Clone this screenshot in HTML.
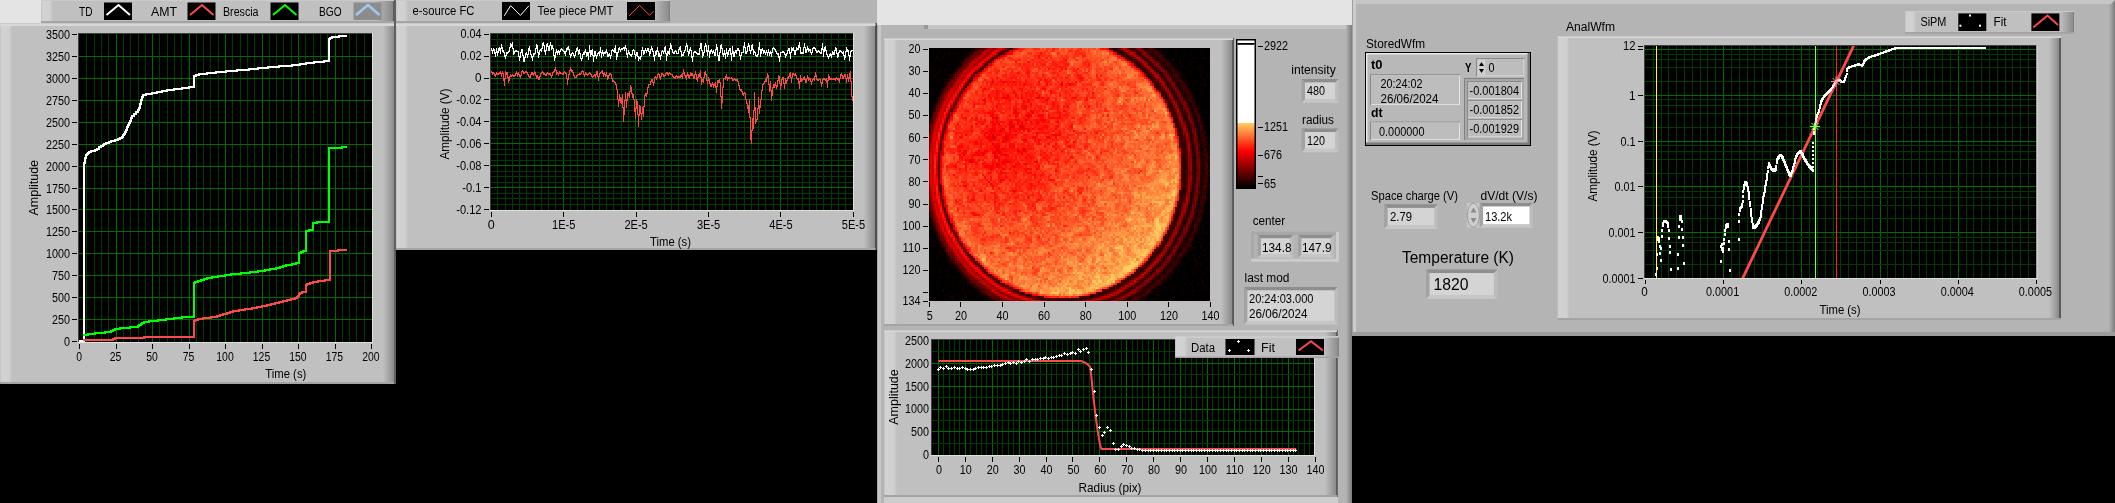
<!DOCTYPE html>
<html><head><meta charset="utf-8"><title>LabVIEW panel</title>
<style>html,body{margin:0;padding:0;background:#000;width:2115px;height:503px;overflow:hidden;position:relative}
text{font-family:"Liberation Sans",sans-serif}</style></head><body>
<svg width="2115" height="503" viewBox="0 0 2115 503" style="position:absolute;left:0;top:0;will-change:transform;font-family:'Liberation Sans',sans-serif">
<defs>
<linearGradient id="gL" x1="0" x2="1"><stop offset="0" stop-color="#bcbcbc"/><stop offset="0.1" stop-color="#d2d2d2"/><stop offset="0.75" stop-color="#d0d0d0"/><stop offset="1" stop-color="#c0c0c0"/></linearGradient>
<linearGradient id="gR" x1="0" x2="1"><stop offset="0" stop-color="#c0c0c0"/><stop offset="0.85" stop-color="#8a8a8a"/><stop offset="0.86" stop-color="#5a5a5a"/><stop offset="1" stop-color="#5a5a5a"/></linearGradient>
<clipPath id="c1"><rect x="79" y="34" width="293" height="308"/></clipPath>
<clipPath id="c2"><rect x="491" y="33" width="362" height="176"/></clipPath>
<clipPath id="c3"><rect x="929" y="48" width="281" height="253"/></clipPath>
<radialGradient id="disk" cx="0.6" cy="0.65" r="0.7"><stop offset="0" stop-color="#ff9a40"/><stop offset="0.6" stop-color="#ff6020"/><stop offset="0.95" stop-color="#ff5018"/><stop offset="1" stop-color="#a00000"/></radialGradient>
<clipPath id="c4"><rect x="932" y="341" width="382" height="114"/></clipPath>
<clipPath id="c5"><rect x="1645" y="46" width="391" height="232"/></clipPath>
<linearGradient id="gRL" x1="0" x2="1"><stop offset="0" stop-color="#c0c0c0"/><stop offset="0.9" stop-color="#8e8e8e"/><stop offset="1" stop-color="#7a7a7a"/></linearGradient>
<linearGradient id="gR2" x1="0" x2="1"><stop offset="0" stop-color="#b4b4b4"/><stop offset="1" stop-color="#7c7c7c"/></linearGradient>
<linearGradient id="ramp" x1="0" x2="0" y1="0" y2="1"><stop offset="0" stop-color="#fff"/><stop offset="0.56" stop-color="#fff"/><stop offset="0.561" stop-color="#ffd060"/><stop offset="0.75" stop-color="#ff0000"/><stop offset="0.92" stop-color="#500000"/><stop offset="1" stop-color="#000"/></linearGradient>
</defs>
<rect x="0.00" y="0.00" width="2115.00" height="503.00" fill="#000" />
<rect x="0.00" y="0.00" width="41.00" height="24.00" fill="#e4e4e4" />
<rect x="669.00" y="0.00" width="208.00" height="23.00" fill="#b4b4b4" />
<rect x="877.00" y="0.00" width="475.00" height="25.00" fill="#e4e4e4" />
<rect x="41.00" y="0.00" width="355.00" height="23.00" fill="#c0c0c0" />
<rect x="41" y="0" width="12" height="23" fill="url(#gL)"/>
<rect x="374" y="0" width="22" height="23" fill="url(#gR)"/>
<rect x="41.00" y="0.00" width="355.00" height="1.00" fill="#cacaca" />
<rect x="41.00" y="1.00" width="355.00" height="0.00" fill="#d8d8d8" />
<rect x="41.00" y="21.00" width="355.00" height="2.00" fill="#a4a4a4" />
<rect x="394.00" y="0.00" width="2.00" height="24.00" fill="#606060" />
<text x="79.0" y="15.5" font-size="12" textLength="13.5" lengthAdjust="spacingAndGlyphs" >TD</text>
<rect x="104.00" y="2.50" width="28.00" height="17.50" fill="#000" />
<polyline points="106.5,15.0 118.5,5.0 130.0,15.0" fill="none" stroke="#fff" stroke-width="2" stroke-linejoin="miter" />
<text x="151.0" y="15.5" font-size="12" textLength="26.0" lengthAdjust="spacingAndGlyphs" >AMT</text>
<rect x="187.50" y="2.50" width="28.00" height="17.50" fill="#000" />
<polyline points="190.0,15.0 202.0,5.0 213.5,15.0" fill="none" stroke="#ff4848" stroke-width="2" stroke-linejoin="miter" />
<text x="223.0" y="15.5" font-size="12" textLength="35.5" lengthAdjust="spacingAndGlyphs" >Brescia</text>
<rect x="270.50" y="2.50" width="28.00" height="17.50" fill="#000" />
<polyline points="273.0,15.0 285.0,5.0 296.5,15.0" fill="none" stroke="#00ff00" stroke-width="2" stroke-linejoin="miter" />
<text x="319.0" y="15.5" font-size="12" textLength="22.5" lengthAdjust="spacingAndGlyphs" >BGO</text>
<rect x="353.50" y="2.50" width="28.00" height="17.50" fill="#8c8c8c" />
<polyline points="356.0,15.0 368.0,5.0 379.5,15.0" fill="none" stroke="#a0c8f0" stroke-width="2.5" stroke-linejoin="miter" />
<rect x="0.00" y="23.00" width="396.00" height="361.00" fill="#c0c0c0" />
<rect x="0" y="23" width="12" height="361" fill="url(#gL)"/>
<rect x="383" y="23" width="13" height="361" fill="url(#gR)"/>
<rect x="0.00" y="23.00" width="396.00" height="1.00" fill="#cacaca" />
<rect x="0.00" y="24.00" width="396.00" height="2.00" fill="#d8d8d8" />
<rect x="0.00" y="382.00" width="396.00" height="2.00" fill="#a4a4a4" />
<rect x="394.00" y="23.00" width="2.00" height="361.00" fill="#606060" />
<rect x="78.00" y="33.00" width="294.00" height="309.00" fill="#000" />
<line x1="78.00" y1="33.50" x2="372.00" y2="33.50" stroke="#404040" stroke-width="1"/>
<line x1="78.50" y1="33.00" x2="78.50" y2="342.00" stroke="#404040" stroke-width="1"/>
<line x1="78.00" y1="342.50" x2="373.00" y2="342.50" stroke="#e0e0e0" stroke-width="1"/>
<line x1="372.50" y1="33.00" x2="372.50" y2="343.00" stroke="#e0e0e0" stroke-width="1"/>
<rect x="86" y="34" width="1" height="308" fill="#003c00"/>
<rect x="94" y="34" width="1" height="308" fill="#003c00"/>
<rect x="101" y="34" width="1" height="308" fill="#003c00"/>
<rect x="108" y="34" width="1" height="308" fill="#003c00"/>
<rect x="116" y="34" width="1" height="308" fill="#006c00"/>
<rect x="123" y="34" width="1" height="308" fill="#003c00"/>
<rect x="130" y="34" width="1" height="308" fill="#003c00"/>
<rect x="138" y="34" width="1" height="308" fill="#003c00"/>
<rect x="145" y="34" width="1" height="308" fill="#003c00"/>
<rect x="152" y="34" width="1" height="308" fill="#006c00"/>
<rect x="159" y="34" width="1" height="308" fill="#003c00"/>
<rect x="167" y="34" width="1" height="308" fill="#003c00"/>
<rect x="174" y="34" width="1" height="308" fill="#003c00"/>
<rect x="181" y="34" width="1" height="308" fill="#003c00"/>
<rect x="189" y="34" width="1" height="308" fill="#006c00"/>
<rect x="196" y="34" width="1" height="308" fill="#003c00"/>
<rect x="203" y="34" width="1" height="308" fill="#003c00"/>
<rect x="210" y="34" width="1" height="308" fill="#003c00"/>
<rect x="218" y="34" width="1" height="308" fill="#003c00"/>
<rect x="225" y="34" width="1" height="308" fill="#006c00"/>
<rect x="232" y="34" width="1" height="308" fill="#003c00"/>
<rect x="240" y="34" width="1" height="308" fill="#003c00"/>
<rect x="247" y="34" width="1" height="308" fill="#003c00"/>
<rect x="254" y="34" width="1" height="308" fill="#003c00"/>
<rect x="262" y="34" width="1" height="308" fill="#006c00"/>
<rect x="269" y="34" width="1" height="308" fill="#003c00"/>
<rect x="276" y="34" width="1" height="308" fill="#003c00"/>
<rect x="283" y="34" width="1" height="308" fill="#003c00"/>
<rect x="291" y="34" width="1" height="308" fill="#003c00"/>
<rect x="298" y="34" width="1" height="308" fill="#006c00"/>
<rect x="305" y="34" width="1" height="308" fill="#003c00"/>
<rect x="313" y="34" width="1" height="308" fill="#003c00"/>
<rect x="320" y="34" width="1" height="308" fill="#003c00"/>
<rect x="327" y="34" width="1" height="308" fill="#003c00"/>
<rect x="335" y="34" width="1" height="308" fill="#006c00"/>
<rect x="342" y="34" width="1" height="308" fill="#003c00"/>
<rect x="349" y="34" width="1" height="308" fill="#003c00"/>
<rect x="356" y="34" width="1" height="308" fill="#003c00"/>
<rect x="364" y="34" width="1" height="308" fill="#003c00"/>
<rect x="79" y="319" width="293" height="1" fill="#006c00"/>
<rect x="79" y="297" width="293" height="1" fill="#006c00"/>
<rect x="79" y="275" width="293" height="1" fill="#006c00"/>
<rect x="79" y="253" width="293" height="1" fill="#006c00"/>
<rect x="79" y="231" width="293" height="1" fill="#006c00"/>
<rect x="79" y="209" width="293" height="1" fill="#006c00"/>
<rect x="79" y="188" width="293" height="1" fill="#006c00"/>
<rect x="79" y="166" width="293" height="1" fill="#006c00"/>
<rect x="79" y="144" width="293" height="1" fill="#006c00"/>
<rect x="79" y="122" width="293" height="1" fill="#006c00"/>
<rect x="79" y="100" width="293" height="1" fill="#006c00"/>
<rect x="79" y="78" width="293" height="1" fill="#006c00"/>
<rect x="79" y="56" width="293" height="1" fill="#006c00"/>
<line x1="72.00" y1="341.50" x2="77.00" y2="341.50" stroke="#000" stroke-width="1"/>
<text x="70.0" y="346.0" font-size="12" text-anchor="end" textLength="6.0" lengthAdjust="spacingAndGlyphs" >0</text>
<line x1="72.00" y1="319.50" x2="77.00" y2="319.50" stroke="#000" stroke-width="1"/>
<text x="70.0" y="324.0" font-size="12" text-anchor="end" textLength="18.0" lengthAdjust="spacingAndGlyphs" >250</text>
<line x1="72.00" y1="297.50" x2="77.00" y2="297.50" stroke="#000" stroke-width="1"/>
<text x="70.0" y="302.0" font-size="12" text-anchor="end" textLength="18.0" lengthAdjust="spacingAndGlyphs" >500</text>
<line x1="72.00" y1="275.50" x2="77.00" y2="275.50" stroke="#000" stroke-width="1"/>
<text x="70.0" y="280.0" font-size="12" text-anchor="end" textLength="18.0" lengthAdjust="spacingAndGlyphs" >750</text>
<line x1="72.00" y1="253.50" x2="77.00" y2="253.50" stroke="#000" stroke-width="1"/>
<text x="70.0" y="258.0" font-size="12" text-anchor="end" textLength="24.0" lengthAdjust="spacingAndGlyphs" >1000</text>
<line x1="72.00" y1="231.50" x2="77.00" y2="231.50" stroke="#000" stroke-width="1"/>
<text x="70.0" y="236.0" font-size="12" text-anchor="end" textLength="24.0" lengthAdjust="spacingAndGlyphs" >1250</text>
<line x1="72.00" y1="209.50" x2="77.00" y2="209.50" stroke="#000" stroke-width="1"/>
<text x="70.0" y="214.0" font-size="12" text-anchor="end" textLength="24.0" lengthAdjust="spacingAndGlyphs" >1500</text>
<line x1="72.00" y1="188.50" x2="77.00" y2="188.50" stroke="#000" stroke-width="1"/>
<text x="70.0" y="193.0" font-size="12" text-anchor="end" textLength="24.0" lengthAdjust="spacingAndGlyphs" >1750</text>
<line x1="72.00" y1="166.50" x2="77.00" y2="166.50" stroke="#000" stroke-width="1"/>
<text x="70.0" y="171.0" font-size="12" text-anchor="end" textLength="24.0" lengthAdjust="spacingAndGlyphs" >2000</text>
<line x1="72.00" y1="144.50" x2="77.00" y2="144.50" stroke="#000" stroke-width="1"/>
<text x="70.0" y="149.0" font-size="12" text-anchor="end" textLength="24.0" lengthAdjust="spacingAndGlyphs" >2250</text>
<line x1="72.00" y1="122.50" x2="77.00" y2="122.50" stroke="#000" stroke-width="1"/>
<text x="70.0" y="127.0" font-size="12" text-anchor="end" textLength="24.0" lengthAdjust="spacingAndGlyphs" >2500</text>
<line x1="72.00" y1="100.50" x2="77.00" y2="100.50" stroke="#000" stroke-width="1"/>
<text x="70.0" y="105.0" font-size="12" text-anchor="end" textLength="24.0" lengthAdjust="spacingAndGlyphs" >2750</text>
<line x1="72.00" y1="78.50" x2="77.00" y2="78.50" stroke="#000" stroke-width="1"/>
<text x="70.0" y="83.0" font-size="12" text-anchor="end" textLength="24.0" lengthAdjust="spacingAndGlyphs" >3000</text>
<line x1="72.00" y1="56.50" x2="77.00" y2="56.50" stroke="#000" stroke-width="1"/>
<text x="70.0" y="61.0" font-size="12" text-anchor="end" textLength="24.0" lengthAdjust="spacingAndGlyphs" >3250</text>
<line x1="72.00" y1="34.50" x2="77.00" y2="34.50" stroke="#000" stroke-width="1"/>
<text x="70.0" y="39.0" font-size="12" text-anchor="end" textLength="24.0" lengthAdjust="spacingAndGlyphs" >3500</text>
<line x1="79.50" y1="344.00" x2="79.50" y2="349.00" stroke="#000" stroke-width="1"/>
<text x="79.1" y="360.8" font-size="12" text-anchor="middle" textLength="5.8" lengthAdjust="spacingAndGlyphs" >0</text>
<line x1="116.50" y1="344.00" x2="116.50" y2="349.00" stroke="#000" stroke-width="1"/>
<text x="115.5" y="360.8" font-size="12" text-anchor="middle" textLength="11.6" lengthAdjust="spacingAndGlyphs" >25</text>
<line x1="152.50" y1="344.00" x2="152.50" y2="349.00" stroke="#000" stroke-width="1"/>
<text x="152.0" y="360.8" font-size="12" text-anchor="middle" textLength="11.6" lengthAdjust="spacingAndGlyphs" >50</text>
<line x1="189.50" y1="344.00" x2="189.50" y2="349.00" stroke="#000" stroke-width="1"/>
<text x="188.5" y="360.8" font-size="12" text-anchor="middle" textLength="11.6" lengthAdjust="spacingAndGlyphs" >75</text>
<line x1="225.50" y1="344.00" x2="225.50" y2="349.00" stroke="#000" stroke-width="1"/>
<text x="225.0" y="360.8" font-size="12" text-anchor="middle" textLength="17.4" lengthAdjust="spacingAndGlyphs" >100</text>
<line x1="262.50" y1="344.00" x2="262.50" y2="349.00" stroke="#000" stroke-width="1"/>
<text x="261.5" y="360.8" font-size="12" text-anchor="middle" textLength="17.4" lengthAdjust="spacingAndGlyphs" >125</text>
<line x1="298.50" y1="344.00" x2="298.50" y2="349.00" stroke="#000" stroke-width="1"/>
<text x="297.9" y="360.8" font-size="12" text-anchor="middle" textLength="17.4" lengthAdjust="spacingAndGlyphs" >150</text>
<line x1="335.50" y1="344.00" x2="335.50" y2="349.00" stroke="#000" stroke-width="1"/>
<text x="334.4" y="360.8" font-size="12" text-anchor="middle" textLength="17.4" lengthAdjust="spacingAndGlyphs" >175</text>
<line x1="371.50" y1="344.00" x2="371.50" y2="349.00" stroke="#000" stroke-width="1"/>
<text x="370.9" y="360.8" font-size="12" text-anchor="middle" textLength="17.4" lengthAdjust="spacingAndGlyphs" >200</text>
<text x="285.8" y="377.6" font-size="12" text-anchor="middle" textLength="41.0" lengthAdjust="spacingAndGlyphs" >Time (s)</text>
<text x="38.0" y="187.7" font-size="12" text-anchor="middle" textLength="55.5" lengthAdjust="spacingAndGlyphs" transform="rotate(-90 38.0 187.7)" >Amplitude</text>
<g clip-path="url(#c1)">
<path d="M78 341L84 341L84 165V163H85V158H86L86 156V155H87V154H88V153H89L89 152H91V151H95V150L97 150H97V149H99V148H99V147L100 147H101V146H103V145H104V144H106V143L107 143H109V142H111V141H115V140L116 140H118V139H120V138L122 138V137H123V135H124V134H125V132H126L126 131V130H127V127H128V125H129V123H130V121H131V118H132L132 117H132V116H134V115H134V114H136V113H136V112H138V111H138V110L139 110V108H140V104H141L141 102V100H142V97H143L143 95H146V94L149 94H152V93H157V92H162V91H167V90L170 90H174V89H182V88H189V87L193 87L194 87L194 76H196V75H199V74L201 74H207V73L212 73H216V72H226V71L230 71H237V70L244 70H249V69H258V68H268V67L273 67H279V66H292V65L298 65H300V64H306V63L308 63H314V62L319 62H324V61L329 61L329 61L329 39H330V38H332V37L333 37H339V36L346 36" fill="none" stroke="#fff" stroke-width="2" shape-rendering="crispEdges" stroke-linecap="square"/>
<path d="M84 335H88V334H95V333L99 333H105V332L110 332H111V331H113V330H115V329L116 329H120V328L124 328H130V327L137 327H138V326H139V325L140 325H141V324H142V323H144V322L145 322H149V321L154 321H158V320H166V319L170 319H174V318H182V317L186 317L193 317L194 317L194 283H195V282H198V281L199 281H201V280H204V279H207V278L209 278H212V277H218V276L221 276H225V275H231V274L235 274H241V273L246 273H250V272H258V271L262 271H265V270H270V269H276V268L279 268H280V267H283V266L284 266H286V265H292V264L294 264H296V263L298 263L299 263L299 253H301V252H303V251L305 251L306 251L306 231H309V230L312 230L313 230L313 223H317V222L321 222L329 222L329 222L329 148L338 148H342V147L346 147" fill="none" stroke="#00ff00" stroke-width="2" shape-rendering="crispEdges" stroke-linecap="square"/>
<path d="M84 340L113 340H113V339H115V338L115 338L143 338H144V337L145 337L193 337L194 337L194 321H195V320H198V319L199 319H203V318H211V317L215 317H217V316H220V315H223V314H227V313H230V312H233V311L235 311H239V310H245V309L249 309H252V308H257V307H262V306L265 306H267V305H271V304H275V303H279V302L281 302H283V301H287V300H291V299H295V298L297 298V297H298V296H299V294H300L300 293H302V292L305 292L306 292L306 285H307V284H310V283H313V282L314 282H318V281H325V280L329 280L330 280L330 251H338V250L346 250" fill="none" stroke="#ff4848" stroke-width="2" shape-rendering="crispEdges" stroke-linecap="square"/>
</g>
<rect x="396.00" y="0.00" width="274.00" height="23.00" fill="#c0c0c0" />
<rect x="396" y="0" width="12" height="23" fill="url(#gL)"/>
<rect x="652" y="0" width="18" height="23" fill="url(#gRL)"/>
<rect x="396.00" y="0.00" width="274.00" height="1.00" fill="#cacaca" />
<rect x="396.00" y="1.00" width="274.00" height="0.00" fill="#d8d8d8" />
<rect x="396.00" y="21.00" width="274.00" height="2.00" fill="#a4a4a4" />
<text x="412.5" y="15.0" font-size="12" textLength="62.0" lengthAdjust="spacingAndGlyphs" >e-source FC</text>
<rect x="502.00" y="2.00" width="28.00" height="18.00" fill="#000" />
<polyline points="504.2,15.9 510.6,5.7 520.5,15.3 529.0,5.7" fill="none" stroke="#fff" stroke-width="1" stroke-linejoin="miter" />
<text x="537.5" y="15.0" font-size="12" textLength="76.0" lengthAdjust="spacingAndGlyphs" >Tee piece PMT</text>
<rect x="627.00" y="2.00" width="28.00" height="18.00" fill="#000" />
<polyline points="629.0,15.9 639.6,5.4 649.6,15.3 653.8,11.0" fill="none" stroke="#ff4848" stroke-width="1" stroke-linejoin="miter" />
<rect x="396.00" y="23.00" width="481.00" height="227.00" fill="#c0c0c0" />
<rect x="396" y="23" width="12" height="227" fill="url(#gL)"/>
<rect x="864" y="23" width="13" height="227" fill="url(#gR)"/>
<rect x="396.00" y="23.00" width="481.00" height="1.00" fill="#cacaca" />
<rect x="396.00" y="24.00" width="481.00" height="2.00" fill="#d8d8d8" />
<rect x="396.00" y="248.00" width="481.00" height="2.00" fill="#a4a4a4" />
<rect x="875.50" y="23.00" width="1.50" height="227.00" fill="#4a4a4a" />
<rect x="490.00" y="33.00" width="363.00" height="177.00" fill="#000" />
<line x1="490.00" y1="33.50" x2="853.00" y2="33.50" stroke="#404040" stroke-width="1"/>
<line x1="490.50" y1="33.00" x2="490.50" y2="210.00" stroke="#404040" stroke-width="1"/>
<line x1="490.00" y1="210.50" x2="854.00" y2="210.50" stroke="#e0e0e0" stroke-width="1"/>
<line x1="853.50" y1="33.00" x2="853.50" y2="211.00" stroke="#e0e0e0" stroke-width="1"/>
<rect x="497" y="34" width="1" height="176" fill="#003c00"/>
<rect x="505" y="34" width="1" height="176" fill="#003c00"/>
<rect x="512" y="34" width="1" height="176" fill="#003c00"/>
<rect x="519" y="34" width="1" height="176" fill="#003c00"/>
<rect x="526" y="34" width="1" height="176" fill="#003c00"/>
<rect x="534" y="34" width="1" height="176" fill="#003c00"/>
<rect x="541" y="34" width="1" height="176" fill="#003c00"/>
<rect x="548" y="34" width="1" height="176" fill="#003c00"/>
<rect x="555" y="34" width="1" height="176" fill="#003c00"/>
<rect x="563" y="34" width="1" height="176" fill="#006c00"/>
<rect x="570" y="34" width="1" height="176" fill="#003c00"/>
<rect x="577" y="34" width="1" height="176" fill="#003c00"/>
<rect x="584" y="34" width="1" height="176" fill="#003c00"/>
<rect x="592" y="34" width="1" height="176" fill="#003c00"/>
<rect x="599" y="34" width="1" height="176" fill="#003c00"/>
<rect x="606" y="34" width="1" height="176" fill="#003c00"/>
<rect x="613" y="34" width="1" height="176" fill="#003c00"/>
<rect x="621" y="34" width="1" height="176" fill="#003c00"/>
<rect x="628" y="34" width="1" height="176" fill="#003c00"/>
<rect x="635" y="34" width="1" height="176" fill="#006c00"/>
<rect x="642" y="34" width="1" height="176" fill="#003c00"/>
<rect x="649" y="34" width="1" height="176" fill="#003c00"/>
<rect x="657" y="34" width="1" height="176" fill="#003c00"/>
<rect x="664" y="34" width="1" height="176" fill="#003c00"/>
<rect x="671" y="34" width="1" height="176" fill="#003c00"/>
<rect x="678" y="34" width="1" height="176" fill="#003c00"/>
<rect x="686" y="34" width="1" height="176" fill="#003c00"/>
<rect x="693" y="34" width="1" height="176" fill="#003c00"/>
<rect x="700" y="34" width="1" height="176" fill="#003c00"/>
<rect x="707" y="34" width="1" height="176" fill="#006c00"/>
<rect x="715" y="34" width="1" height="176" fill="#003c00"/>
<rect x="722" y="34" width="1" height="176" fill="#003c00"/>
<rect x="729" y="34" width="1" height="176" fill="#003c00"/>
<rect x="736" y="34" width="1" height="176" fill="#003c00"/>
<rect x="744" y="34" width="1" height="176" fill="#003c00"/>
<rect x="751" y="34" width="1" height="176" fill="#003c00"/>
<rect x="758" y="34" width="1" height="176" fill="#003c00"/>
<rect x="765" y="34" width="1" height="176" fill="#003c00"/>
<rect x="773" y="34" width="1" height="176" fill="#003c00"/>
<rect x="780" y="34" width="1" height="176" fill="#006c00"/>
<rect x="787" y="34" width="1" height="176" fill="#003c00"/>
<rect x="794" y="34" width="1" height="176" fill="#003c00"/>
<rect x="802" y="34" width="1" height="176" fill="#003c00"/>
<rect x="809" y="34" width="1" height="176" fill="#003c00"/>
<rect x="816" y="34" width="1" height="176" fill="#003c00"/>
<rect x="823" y="34" width="1" height="176" fill="#003c00"/>
<rect x="831" y="34" width="1" height="176" fill="#003c00"/>
<rect x="838" y="34" width="1" height="176" fill="#003c00"/>
<rect x="845" y="34" width="1" height="176" fill="#003c00"/>
<rect x="491" y="39" width="362" height="1" fill="#003c00"/>
<rect x="491" y="45" width="362" height="1" fill="#003c00"/>
<rect x="491" y="50" width="362" height="1" fill="#003c00"/>
<rect x="491" y="56" width="362" height="1" fill="#006c00"/>
<rect x="491" y="61" width="362" height="1" fill="#003c00"/>
<rect x="491" y="67" width="362" height="1" fill="#003c00"/>
<rect x="491" y="72" width="362" height="1" fill="#003c00"/>
<rect x="491" y="78" width="362" height="1" fill="#006c00"/>
<rect x="491" y="83" width="362" height="1" fill="#003c00"/>
<rect x="491" y="89" width="362" height="1" fill="#003c00"/>
<rect x="491" y="94" width="362" height="1" fill="#003c00"/>
<rect x="491" y="99" width="362" height="1" fill="#006c00"/>
<rect x="491" y="105" width="362" height="1" fill="#003c00"/>
<rect x="491" y="110" width="362" height="1" fill="#003c00"/>
<rect x="491" y="116" width="362" height="1" fill="#003c00"/>
<rect x="491" y="121" width="362" height="1" fill="#006c00"/>
<rect x="491" y="127" width="362" height="1" fill="#003c00"/>
<rect x="491" y="132" width="362" height="1" fill="#003c00"/>
<rect x="491" y="138" width="362" height="1" fill="#003c00"/>
<rect x="491" y="143" width="362" height="1" fill="#006c00"/>
<rect x="491" y="149" width="362" height="1" fill="#003c00"/>
<rect x="491" y="154" width="362" height="1" fill="#003c00"/>
<rect x="491" y="160" width="362" height="1" fill="#003c00"/>
<rect x="491" y="165" width="362" height="1" fill="#006c00"/>
<rect x="491" y="171" width="362" height="1" fill="#003c00"/>
<rect x="491" y="176" width="362" height="1" fill="#003c00"/>
<rect x="491" y="182" width="362" height="1" fill="#003c00"/>
<rect x="491" y="187" width="362" height="1" fill="#006c00"/>
<rect x="491" y="193" width="362" height="1" fill="#003c00"/>
<rect x="491" y="198" width="362" height="1" fill="#003c00"/>
<rect x="491" y="204" width="362" height="1" fill="#003c00"/>
<line x1="484.00" y1="34.50" x2="489.00" y2="34.50" stroke="#000" stroke-width="1"/>
<text x="481.5" y="38.4" font-size="12" text-anchor="end" textLength="21.1" lengthAdjust="spacingAndGlyphs" >0.04</text>
<line x1="484.00" y1="56.50" x2="489.00" y2="56.50" stroke="#000" stroke-width="1"/>
<text x="481.5" y="60.3" font-size="12" text-anchor="end" textLength="21.1" lengthAdjust="spacingAndGlyphs" >0.02</text>
<line x1="484.00" y1="78.50" x2="489.00" y2="78.50" stroke="#000" stroke-width="1"/>
<text x="481.5" y="82.2" font-size="12" text-anchor="end" textLength="6.5" lengthAdjust="spacingAndGlyphs" >0</text>
<line x1="484.00" y1="99.50" x2="489.00" y2="99.50" stroke="#000" stroke-width="1"/>
<text x="481.5" y="104.1" font-size="12" text-anchor="end" textLength="25.2" lengthAdjust="spacingAndGlyphs" >-0.02</text>
<line x1="484.00" y1="121.50" x2="489.00" y2="121.50" stroke="#000" stroke-width="1"/>
<text x="481.5" y="126.0" font-size="12" text-anchor="end" textLength="25.2" lengthAdjust="spacingAndGlyphs" >-0.04</text>
<line x1="484.00" y1="143.50" x2="489.00" y2="143.50" stroke="#000" stroke-width="1"/>
<text x="481.5" y="147.9" font-size="12" text-anchor="end" textLength="25.2" lengthAdjust="spacingAndGlyphs" >-0.06</text>
<line x1="484.00" y1="165.50" x2="489.00" y2="165.50" stroke="#000" stroke-width="1"/>
<text x="481.5" y="169.8" font-size="12" text-anchor="end" textLength="25.2" lengthAdjust="spacingAndGlyphs" >-0.08</text>
<line x1="484.00" y1="187.50" x2="489.00" y2="187.50" stroke="#000" stroke-width="1"/>
<text x="481.5" y="191.7" font-size="12" text-anchor="end" textLength="19.2" lengthAdjust="spacingAndGlyphs" >-0.1</text>
<line x1="484.00" y1="209.50" x2="489.00" y2="209.50" stroke="#000" stroke-width="1"/>
<text x="481.5" y="213.6" font-size="12" text-anchor="end" textLength="25.2" lengthAdjust="spacingAndGlyphs" >-0.12</text>
<line x1="491.50" y1="212.00" x2="491.50" y2="217.00" stroke="#000" stroke-width="1"/>
<text x="491.2" y="228.8" font-size="12" text-anchor="middle" textLength="7.0" lengthAdjust="spacingAndGlyphs" >0</text>
<line x1="563.50" y1="212.00" x2="563.50" y2="217.00" stroke="#000" stroke-width="1"/>
<text x="563.7" y="228.8" font-size="12" text-anchor="middle" textLength="23.4" lengthAdjust="spacingAndGlyphs" >1E-5</text>
<line x1="636.50" y1="212.00" x2="636.50" y2="217.00" stroke="#000" stroke-width="1"/>
<text x="636.1" y="228.8" font-size="12" text-anchor="middle" textLength="23.4" lengthAdjust="spacingAndGlyphs" >2E-5</text>
<line x1="708.50" y1="212.00" x2="708.50" y2="217.00" stroke="#000" stroke-width="1"/>
<text x="708.6" y="228.8" font-size="12" text-anchor="middle" textLength="23.4" lengthAdjust="spacingAndGlyphs" >3E-5</text>
<line x1="780.50" y1="212.00" x2="780.50" y2="217.00" stroke="#000" stroke-width="1"/>
<text x="781.0" y="228.8" font-size="12" text-anchor="middle" textLength="23.4" lengthAdjust="spacingAndGlyphs" >4E-5</text>
<line x1="853.50" y1="212.00" x2="853.50" y2="217.00" stroke="#000" stroke-width="1"/>
<text x="853.5" y="228.8" font-size="12" text-anchor="middle" textLength="23.4" lengthAdjust="spacingAndGlyphs" >5E-5</text>
<text x="670.5" y="246.0" font-size="12" text-anchor="middle" textLength="41.0" lengthAdjust="spacingAndGlyphs" >Time (s)</text>
<text x="449.0" y="124.0" font-size="12" text-anchor="middle" textLength="71.0" lengthAdjust="spacingAndGlyphs" transform="rotate(-90 449.0 124.0)" >Amplitude (V)</text>
<g clip-path="url(#c2)">
<path fill="#fff" d="M491 48h1v1h-1zM491 48h1v3h-1zM492 50h1v4h-1zM492 50h1v4h-1zM493 48h1v3h-1zM493 48h1v2h-1zM494 49h1v3h-1zM494 51h1v3h-1zM495 53h1v4h-1zM495 52h1v5h-1zM496 48h1v5h-1zM496 48h1v4h-1zM497 51h1v5h-1zM497 52h1v4h-1zM498 49h1v4h-1zM498 48h1v2h-1zM499 47h1v2h-1zM499 47h1v4h-1zM500 50h1v4h-1zM500 48h1v6h-1zM501 44h1v5h-1zM501 44h1v4h-1zM502 47h1v5h-1zM503 50h1v2h-1zM503 50h1v3h-1zM504 52h1v4h-1zM504 55h1v2h-1zM505 56h1v3h-1zM505 55h1v4h-1zM506 52h1v4h-1zM507 52h1v2h-1zM507 52h1v2h-1zM508 51h1v2h-1zM509 51h1v1h-1zM509 47h1v5h-1zM510 43h1v5h-1zM510 43h1v2h-1zM511 44h1v3h-1zM511 44h1v3h-1zM512 42h1v3h-1zM512 42h1v7h-1zM513 48h1v7h-1zM513 53h1v2h-1zM514 52h1v2h-1zM514 51h1v2h-1zM515 50h1v2h-1zM516 50h1v2h-1zM517 51h1v1h-1zM518 51h1v2h-1zM518 52h1v5h-1zM519 56h1v5h-1zM519 57h1v4h-1zM520 55h1v3h-1zM520 52h1v4h-1zM521 49h1v4h-1zM522 49h1v2h-1zM522 50h1v6h-1zM523 55h1v7h-1zM524 61h1v1h-1zM524 57h1v5h-1zM525 53h1v5h-1zM526 52h1v2h-1zM526 52h1v3h-1zM527 54h1v4h-1zM527 54h1v4h-1zM528 51h1v4h-1zM528 48h1v4h-1zM529 46h1v3h-1zM529 46h1v5h-1zM530 50h1v5h-1zM531 54h1v1h-1zM531 54h1v4h-1zM532 57h1v4h-1zM532 56h1v5h-1zM533 53h1v4h-1zM534 53h1v2h-1zM534 53h1v2h-1zM535 52h1v2h-1zM535 48h1v5h-1zM536 44h1v5h-1zM536 44h1v2h-1zM537 45h1v3h-1zM537 47h1v6h-1zM538 52h1v6h-1zM538 54h1v4h-1zM539 51h1v4h-1zM539 50h1v2h-1zM540 49h1v2h-1zM540 49h1v2h-1zM541 50h1v2h-1zM541 48h1v4h-1zM542 45h1v4h-1zM542 43h1v3h-1zM543 42h1v2h-1zM543 42h1v4h-1zM544 45h1v4h-1zM544 48h1v4h-1zM545 51h1v4h-1zM545 50h1v5h-1zM546 46h1v5h-1zM546 44h1v3h-1zM547 43h1v2h-1zM547 43h1v4h-1zM548 46h1v5h-1zM549 49h1v2h-1zM549 45h1v5h-1zM550 42h1v4h-1zM550 42h1v4h-1zM551 45h1v5h-1zM551 47h1v3h-1zM552 45h1v3h-1zM552 45h1v4h-1zM553 48h1v4h-1zM553 51h1v5h-1zM554 55h1v6h-1zM554 57h1v4h-1zM555 55h1v3h-1zM555 52h1v4h-1zM556 49h1v4h-1zM556 49h1v3h-1zM557 51h1v4h-1zM557 52h1v3h-1zM558 50h1v3h-1zM558 50h1v3h-1zM559 52h1v3h-1zM559 51h1v4h-1zM560 49h1v3h-1zM561 48h1v2h-1zM561 48h1v2h-1zM562 49h1v2h-1zM563 50h1v2h-1zM564 51h1v1h-1zM564 51h1v3h-1zM565 53h1v3h-1zM565 51h1v5h-1zM566 48h1v4h-1zM567 48h1v2h-1zM567 47h1v3h-1zM568 46h1v2h-1zM568 46h1v4h-1zM569 49h1v4h-1zM569 52h1v3h-1zM570 54h1v4h-1zM570 55h1v3h-1zM571 54h1v2h-1zM571 53h1v2h-1zM572 52h1v2h-1zM572 52h1v2h-1zM573 53h1v2h-1zM573 54h1v2h-1zM574 55h1v3h-1zM574 55h1v3h-1zM575 53h1v3h-1zM575 51h1v3h-1zM576 50h1v2h-1zM576 48h1v3h-1zM577 47h1v2h-1zM577 47h1v4h-1zM578 50h1v5h-1zM578 51h1v4h-1zM579 49h1v3h-1zM579 49h1v5h-1zM580 53h1v5h-1zM580 57h1v2h-1zM581 58h1v3h-1zM581 58h1v3h-1zM582 57h1v2h-1zM582 54h1v4h-1zM583 52h1v3h-1zM583 52h1v2h-1zM584 53h1v2h-1zM584 51h1v4h-1zM585 49h1v3h-1zM585 49h1v4h-1zM586 52h1v5h-1zM586 54h1v3h-1zM587 52h1v3h-1zM587 52h1v4h-1zM588 55h1v5h-1zM588 52h1v8h-1zM589 45h1v8h-1zM589 45h1v6h-1zM590 50h1v7h-1zM590 54h1v3h-1zM591 52h1v3h-1zM591 50h1v3h-1zM592 49h1v2h-1zM592 49h1v7h-1zM593 55h1v7h-1zM593 56h1v6h-1zM594 51h1v6h-1zM595 51h1v2h-1zM595 52h1v4h-1zM596 55h1v4h-1zM596 55h1v4h-1zM597 53h1v3h-1zM598 52h1v2h-1zM598 52h1v2h-1zM599 53h1v3h-1zM599 51h1v5h-1zM600 47h1v5h-1zM600 47h1v6h-1zM601 52h1v6h-1zM601 53h1v5h-1zM602 50h1v4h-1zM602 50h1v3h-1zM603 52h1v4h-1zM603 53h1v3h-1zM604 52h1v2h-1zM605 52h1v2h-1zM605 51h1v3h-1zM606 49h1v3h-1zM606 49h1v4h-1zM607 52h1v5h-1zM608 55h1v2h-1zM608 54h1v2h-1zM609 53h1v2h-1zM609 53h1v3h-1zM610 55h1v4h-1zM610 55h1v4h-1zM611 52h1v4h-1zM611 50h1v3h-1zM612 49h1v2h-1zM612 49h1v2h-1zM613 50h1v2h-1zM614 51h1v2h-1zM614 48h1v5h-1zM615 45h1v4h-1zM615 45h1v8h-1zM616 52h1v8h-1zM616 56h1v4h-1zM617 54h1v3h-1zM617 52h1v3h-1zM618 50h1v3h-1zM618 48h1v3h-1zM619 47h1v2h-1zM619 47h1v3h-1zM620 49h1v3h-1zM620 49h1v3h-1zM621 48h1v2h-1zM622 48h1v2h-1zM622 48h1v2h-1zM623 47h1v2h-1zM623 47h1v2h-1zM624 48h1v3h-1zM624 47h1v4h-1zM625 45h1v3h-1zM625 45h1v4h-1zM626 48h1v4h-1zM626 51h1v4h-1zM627 54h1v4h-1zM627 53h1v5h-1zM628 50h1v4h-1zM628 50h1v3h-1zM629 52h1v3h-1zM630 54h1v1h-1zM630 54h1v2h-1zM631 55h1v2h-1zM631 54h1v3h-1zM632 52h1v3h-1zM632 50h1v3h-1zM633 49h1v2h-1zM633 49h1v2h-1zM634 50h1v2h-1zM634 51h1v4h-1zM635 54h1v5h-1zM635 55h1v4h-1zM636 52h1v4h-1zM637 52h1v2h-1zM637 53h1v4h-1zM638 56h1v5h-1zM638 58h1v3h-1zM639 57h1v2h-1zM639 57h1v2h-1zM640 58h1v2h-1zM640 56h1v4h-1zM641 53h1v4h-1zM641 50h1v4h-1zM642 47h1v4h-1zM642 47h1v4h-1zM643 50h1v5h-1zM643 53h1v2h-1zM644 52h1v2h-1zM644 50h1v3h-1zM645 48h1v3h-1zM645 48h1v3h-1zM646 50h1v3h-1zM646 50h1v3h-1zM647 48h1v3h-1zM648 48h1v1h-1zM648 48h1v4h-1zM649 51h1v5h-1zM649 53h1v3h-1zM650 52h1v2h-1zM650 49h1v4h-1zM651 46h1v4h-1zM651 46h1v3h-1zM652 48h1v3h-1zM652 50h1v2h-1zM653 51h1v2h-1zM653 52h1v5h-1zM654 56h1v5h-1zM654 55h1v6h-1zM655 51h1v5h-1zM655 51h1v2h-1zM656 52h1v3h-1zM656 50h1v5h-1zM657 47h1v4h-1zM657 47h1v5h-1zM658 51h1v6h-1zM658 54h1v3h-1zM659 53h1v2h-1zM659 53h1v4h-1zM660 56h1v4h-1zM660 55h1v5h-1zM661 52h1v4h-1zM661 51h1v2h-1zM662 50h1v2h-1zM662 50h1v2h-1zM663 51h1v3h-1zM663 51h1v3h-1zM664 49h1v3h-1zM664 47h1v3h-1zM665 46h1v2h-1zM665 46h1v8h-1zM666 53h1v8h-1zM666 55h1v6h-1zM667 51h1v5h-1zM668 51h1v2h-1zM668 52h1v2h-1zM669 53h1v2h-1zM669 48h1v7h-1zM670 43h1v6h-1zM670 43h1v3h-1zM671 45h1v3h-1zM671 47h1v3h-1zM672 49h1v3h-1zM672 51h1v2h-1zM673 52h1v2h-1zM674 52h1v2h-1zM674 51h1v2h-1zM675 50h1v2h-1zM675 50h1v2h-1zM676 51h1v3h-1zM677 53h1v1h-1zM678 52h1v2h-1zM678 49h1v4h-1zM679 47h1v3h-1zM680 46h1v2h-1zM680 46h1v6h-1zM681 51h1v6h-1zM681 55h1v2h-1zM682 54h1v2h-1zM683 54h1v2h-1zM683 52h1v4h-1zM684 50h1v3h-1zM685 49h1v2h-1zM685 46h1v4h-1zM686 43h1v4h-1zM686 43h1v3h-1zM687 45h1v3h-1zM687 47h1v5h-1zM688 51h1v5h-1zM688 53h1v3h-1zM689 52h1v2h-1zM689 49h1v4h-1zM690 47h1v3h-1zM690 47h1v4h-1zM691 50h1v5h-1zM691 54h1v4h-1zM692 57h1v5h-1zM692 56h1v6h-1zM693 52h1v5h-1zM694 51h1v2h-1zM695 51h1v1h-1zM695 51h1v2h-1zM696 52h1v2h-1zM697 53h1v2h-1zM698 53h1v2h-1zM699 53h1v2h-1zM699 48h1v7h-1zM700 43h1v6h-1zM701 43h1v2h-1zM701 44h1v7h-1zM702 50h1v8h-1zM702 55h1v3h-1zM703 54h1v2h-1zM703 52h1v3h-1zM704 50h1v3h-1zM704 46h1v5h-1zM705 43h1v4h-1zM705 43h1v3h-1zM706 45h1v4h-1zM706 48h1v4h-1zM707 51h1v5h-1zM707 50h1v6h-1zM708 45h1v6h-1zM708 45h1v7h-1zM709 51h1v7h-1zM709 53h1v5h-1zM710 50h1v4h-1zM711 49h1v2h-1zM711 49h1v3h-1zM712 51h1v3h-1zM712 51h1v3h-1zM713 50h1v2h-1zM713 50h1v3h-1zM714 52h1v4h-1zM715 55h1v1h-1zM715 49h1v7h-1zM716 44h1v6h-1zM716 44h1v4h-1zM717 47h1v4h-1zM717 50h1v6h-1zM718 55h1v6h-1zM719 59h1v2h-1zM719 52h1v8h-1zM720 45h1v8h-1zM721 44h1v2h-1zM721 44h1v5h-1zM722 48h1v6h-1zM722 53h1v2h-1zM723 54h1v3h-1zM723 53h1v4h-1zM724 50h1v4h-1zM724 50h1v5h-1zM725 54h1v5h-1zM725 53h1v6h-1zM726 48h1v6h-1zM726 48h1v5h-1zM727 52h1v5h-1zM727 54h1v3h-1zM728 53h1v2h-1zM728 50h1v4h-1zM729 48h1v3h-1zM730 48h1v2h-1zM730 49h1v6h-1zM731 54h1v7h-1zM731 53h1v8h-1zM732 46h1v8h-1zM732 46h1v6h-1zM733 51h1v6h-1zM734 55h1v2h-1zM734 52h1v4h-1zM735 50h1v3h-1zM735 50h1v2h-1zM736 51h1v3h-1zM736 50h1v4h-1zM737 48h1v3h-1zM738 48h1v2h-1zM738 49h1v2h-1zM739 50h1v3h-1zM739 52h1v4h-1zM740 55h1v5h-1zM740 55h1v5h-1zM741 52h1v4h-1zM742 52h1v1h-1zM743 51h1v2h-1zM743 46h1v6h-1zM744 42h1v5h-1zM744 42h1v6h-1zM745 47h1v7h-1zM746 53h1v1h-1zM746 51h1v3h-1zM747 50h1v2h-1zM747 46h1v5h-1zM748 43h1v4h-1zM748 43h1v3h-1zM749 45h1v3h-1zM749 47h1v4h-1zM750 50h1v4h-1zM750 50h1v4h-1zM751 47h1v4h-1zM751 45h1v3h-1zM752 44h1v2h-1zM752 44h1v6h-1zM753 49h1v6h-1zM753 52h1v3h-1zM754 51h1v2h-1zM754 51h1v2h-1zM755 52h1v3h-1zM755 54h1v2h-1zM756 55h1v2h-1zM757 55h1v2h-1zM757 54h1v2h-1zM758 53h1v2h-1zM758 47h1v7h-1zM759 42h1v6h-1zM759 42h1v8h-1zM760 49h1v8h-1zM760 53h1v4h-1zM761 50h1v4h-1zM761 49h1v2h-1zM762 48h1v2h-1zM762 48h1v3h-1zM763 50h1v4h-1zM763 51h1v3h-1zM764 50h1v2h-1zM764 50h1v3h-1zM765 52h1v3h-1zM765 52h1v3h-1zM766 50h1v3h-1zM766 50h1v3h-1zM767 52h1v4h-1zM767 52h1v4h-1zM768 49h1v4h-1zM768 49h1v4h-1zM769 52h1v4h-1zM769 53h1v3h-1zM770 51h1v3h-1zM770 51h1v3h-1zM771 53h1v4h-1zM771 52h1v5h-1zM772 48h1v5h-1zM773 47h1v2h-1zM773 47h1v2h-1zM774 48h1v2h-1zM775 49h1v2h-1zM775 50h1v2h-1zM776 51h1v3h-1zM777 53h1v2h-1zM778 53h1v2h-1zM778 53h1v5h-1zM779 57h1v5h-1zM779 56h1v6h-1zM780 52h1v5h-1zM781 52h1v1h-1zM782 51h1v2h-1zM783 51h1v2h-1zM784 52h1v1h-1zM784 52h1v3h-1zM785 54h1v4h-1zM785 55h1v3h-1zM786 54h1v2h-1zM786 53h1v2h-1zM787 52h1v2h-1zM787 50h1v3h-1zM788 48h1v3h-1zM789 48h1v1h-1zM789 48h1v6h-1zM790 53h1v6h-1zM790 52h1v7h-1zM791 47h1v6h-1zM791 47h1v2h-1zM792 48h1v3h-1zM792 48h1v3h-1zM793 47h1v2h-1zM793 47h1v4h-1zM794 50h1v5h-1zM795 53h1v2h-1zM795 50h1v4h-1zM796 47h1v4h-1zM796 47h1v2h-1zM797 48h1v2h-1zM798 49h1v1h-1zM798 45h1v5h-1zM799 42h1v4h-1zM799 42h1v6h-1zM800 47h1v7h-1zM801 52h1v2h-1zM802 52h1v2h-1zM803 52h1v2h-1zM803 47h1v6h-1zM804 43h1v5h-1zM804 43h1v5h-1zM805 47h1v6h-1zM806 52h1v1h-1zM806 49h1v4h-1zM807 46h1v4h-1zM807 46h1v3h-1zM808 48h1v4h-1zM808 50h1v2h-1zM809 49h1v2h-1zM810 49h1v2h-1zM810 50h1v3h-1zM811 52h1v3h-1zM811 52h1v3h-1zM812 50h1v3h-1zM812 48h1v3h-1zM813 47h1v2h-1zM814 47h1v1h-1zM814 47h1v2h-1zM815 48h1v2h-1zM815 49h1v2h-1zM816 50h1v3h-1zM817 52h1v1h-1zM817 51h1v2h-1zM818 50h1v2h-1zM818 50h1v2h-1zM819 51h1v2h-1zM820 52h1v2h-1zM821 53h1v1h-1zM821 48h1v6h-1zM822 43h1v6h-1zM822 43h1v7h-1zM823 49h1v8h-1zM823 51h1v6h-1zM824 47h1v5h-1zM825 46h1v2h-1zM825 46h1v5h-1zM826 50h1v5h-1zM827 54h1v2h-1zM827 55h1v2h-1zM828 56h1v3h-1zM828 56h1v3h-1zM829 55h1v2h-1zM829 54h1v2h-1zM830 53h1v2h-1zM830 53h1v3h-1zM831 55h1v3h-1zM831 54h1v4h-1zM832 51h1v4h-1zM832 51h1v2h-1zM833 52h1v3h-1zM834 53h1v2h-1zM834 50h1v4h-1zM835 47h1v4h-1zM835 47h1v2h-1zM836 48h1v2h-1zM836 49h1v5h-1zM837 53h1v5h-1zM837 56h1v2h-1zM838 55h1v2h-1zM838 52h1v4h-1zM839 50h1v3h-1zM840 50h1v2h-1zM841 51h1v1h-1zM841 51h1v2h-1zM842 52h1v2h-1zM842 52h1v2h-1zM843 51h1v2h-1zM843 51h1v5h-1zM844 55h1v5h-1zM844 57h1v3h-1zM845 56h1v2h-1zM845 51h1v6h-1zM846 47h1v5h-1zM846 47h1v3h-1zM847 49h1v3h-1zM848 50h1v2h-1zM848 50h1v6h-1zM849 55h1v6h-1zM849 56h1v5h-1zM850 52h1v5h-1zM850 51h1v2h-1zM851 50h1v2h-1zM852 50h1v1h-1z"/>
<path fill="#ff4848" d="M491 71h1v1h-1zM491 71h1v2h-1zM492 72h1v3h-1zM492 73h1v2h-1zM493 72h1v2h-1zM493 72h1v2h-1zM494 73h1v2h-1zM494 74h1v2h-1zM495 75h1v2h-1zM495 74h1v3h-1zM496 72h1v3h-1zM496 72h1v2h-1zM497 73h1v2h-1zM498 73h1v2h-1zM499 72h1v2h-1zM500 71h1v2h-1zM500 71h1v3h-1zM501 73h1v4h-1zM501 73h1v4h-1zM502 71h1v3h-1zM502 71h1v3h-1zM503 73h1v3h-1zM503 75h1v6h-1zM504 80h1v6h-1zM504 78h1v8h-1zM505 71h1v8h-1zM505 71h1v2h-1zM506 72h1v3h-1zM506 73h1v2h-1zM507 72h1v2h-1zM507 72h1v6h-1zM508 77h1v6h-1zM508 80h1v3h-1zM509 78h1v3h-1zM509 76h1v3h-1zM510 74h1v3h-1zM510 74h1v2h-1zM511 75h1v2h-1zM511 75h1v2h-1zM512 74h1v2h-1zM512 74h1v2h-1zM513 75h1v2h-1zM514 75h1v2h-1zM515 75h1v1h-1zM515 73h1v3h-1zM516 71h1v3h-1zM516 71h1v3h-1zM517 73h1v4h-1zM517 74h1v3h-1zM518 72h1v3h-1zM518 72h1v3h-1zM519 74h1v3h-1zM520 76h1v2h-1zM520 75h1v3h-1zM521 73h1v3h-1zM521 71h1v3h-1zM522 70h1v2h-1zM522 70h1v2h-1zM523 71h1v3h-1zM524 73h1v1h-1zM524 72h1v2h-1zM525 71h1v2h-1zM526 71h1v2h-1zM527 72h1v1h-1zM527 72h1v3h-1zM528 74h1v3h-1zM529 76h1v2h-1zM530 77h1v1h-1zM530 74h1v4h-1zM531 72h1v3h-1zM532 72h1v2h-1zM532 73h1v2h-1zM533 74h1v2h-1zM533 73h1v3h-1zM534 71h1v3h-1zM534 71h1v2h-1zM535 72h1v2h-1zM535 73h1v3h-1zM536 75h1v4h-1zM536 76h1v3h-1zM537 75h1v2h-1zM537 75h1v3h-1zM538 77h1v3h-1zM539 79h1v1h-1zM539 76h1v4h-1zM540 73h1v4h-1zM541 72h1v2h-1zM542 71h1v2h-1zM542 71h1v2h-1zM543 72h1v3h-1zM544 73h1v2h-1zM544 73h1v2h-1zM545 74h1v2h-1zM546 75h1v1h-1zM546 73h1v3h-1zM547 72h1v2h-1zM547 72h1v2h-1zM548 73h1v2h-1zM549 73h1v2h-1zM550 73h1v1h-1zM550 73h1v3h-1zM551 75h1v3h-1zM551 75h1v3h-1zM552 73h1v3h-1zM552 72h1v2h-1zM553 71h1v2h-1zM554 71h1v1h-1zM554 69h1v3h-1zM555 67h1v3h-1zM555 67h1v4h-1zM556 70h1v5h-1zM556 73h1v2h-1zM557 72h1v2h-1zM557 72h1v2h-1zM558 73h1v3h-1zM558 73h1v3h-1zM559 71h1v3h-1zM559 71h1v2h-1zM560 72h1v2h-1zM561 73h1v1h-1zM562 73h1v2h-1zM563 73h1v2h-1zM563 72h1v2h-1zM564 71h1v2h-1zM564 71h1v2h-1zM565 72h1v2h-1zM566 73h1v1h-1zM566 73h1v6h-1zM567 78h1v7h-1zM567 79h1v6h-1zM568 74h1v6h-1zM569 73h1v2h-1zM569 70h1v4h-1zM570 67h1v4h-1zM570 67h1v3h-1zM571 69h1v3h-1zM572 70h1v2h-1zM572 70h1v3h-1zM573 72h1v3h-1zM573 74h1v2h-1zM574 75h1v3h-1zM575 77h1v1h-1zM576 76h1v2h-1zM576 75h1v2h-1zM577 74h1v2h-1zM578 74h1v1h-1zM579 73h1v2h-1zM580 73h1v2h-1zM580 73h1v2h-1zM581 72h1v2h-1zM581 71h1v2h-1zM582 70h1v2h-1zM582 70h1v2h-1zM583 71h1v3h-1zM583 73h1v2h-1zM584 74h1v3h-1zM584 74h1v3h-1zM585 72h1v3h-1zM585 72h1v2h-1zM586 73h1v2h-1zM587 74h1v2h-1zM587 74h1v2h-1zM588 73h1v2h-1zM589 72h1v2h-1zM589 72h1v2h-1zM590 73h1v2h-1zM591 74h1v2h-1zM591 75h1v2h-1zM592 76h1v2h-1zM592 76h1v2h-1zM593 75h1v2h-1zM594 74h1v2h-1zM594 74h1v2h-1zM595 75h1v3h-1zM595 74h1v4h-1zM596 71h1v4h-1zM597 71h1v2h-1zM597 72h1v5h-1zM598 76h1v5h-1zM598 76h1v5h-1zM599 73h1v4h-1zM600 72h1v2h-1zM601 72h1v1h-1zM601 71h1v2h-1zM602 70h1v2h-1zM602 70h1v4h-1zM603 73h1v4h-1zM603 74h1v3h-1zM604 72h1v3h-1zM604 72h1v3h-1zM605 74h1v3h-1zM605 74h1v3h-1zM606 72h1v3h-1zM606 72h1v4h-1zM607 75h1v5h-1zM607 78h1v2h-1zM608 77h1v2h-1zM608 75h1v3h-1zM609 73h1v3h-1zM610 73h1v2h-1zM611 74h1v2h-1zM611 75h1v4h-1zM612 78h1v4h-1zM613 80h1v2h-1zM613 80h1v2h-1zM614 81h1v2h-1zM615 82h1v2h-1zM615 83h1v2h-1zM616 84h1v3h-1zM616 86h1v4h-1zM617 89h1v5h-1zM617 93h1v7h-1zM618 99h1v8h-1zM618 100h1v7h-1zM619 94h1v7h-1zM619 94h1v4h-1zM620 97h1v5h-1zM620 101h1v2h-1zM621 102h1v2h-1zM621 98h1v6h-1zM622 94h1v5h-1zM622 94h1v14h-1zM623 107h1v15h-1zM623 114h1v8h-1zM624 108h1v7h-1zM624 100h1v9h-1zM625 92h1v9h-1zM625 92h1v8h-1zM626 99h1v9h-1zM626 100h1v8h-1zM627 93h1v8h-1zM628 93h1v1h-1zM628 93h1v3h-1zM629 95h1v3h-1zM629 91h1v7h-1zM630 85h1v7h-1zM630 85h1v3h-1zM631 87h1v3h-1zM631 89h1v5h-1zM632 93h1v5h-1zM632 95h1v3h-1zM633 94h1v2h-1zM633 94h1v6h-1zM634 99h1v6h-1zM634 104h1v8h-1zM635 111h1v8h-1zM635 108h1v11h-1zM636 99h1v10h-1zM636 99h1v3h-1zM637 101h1v3h-1zM637 103h1v12h-1zM638 114h1v13h-1zM638 115h1v12h-1zM639 105h1v11h-1zM639 105h1v2h-1zM640 106h1v3h-1zM640 108h1v6h-1zM641 113h1v7h-1zM641 113h1v7h-1zM642 107h1v7h-1zM642 107h1v5h-1zM643 111h1v6h-1zM643 106h1v11h-1zM644 97h1v10h-1zM644 95h1v3h-1zM645 93h1v3h-1zM645 93h1v2h-1zM646 94h1v3h-1zM646 93h1v4h-1zM647 90h1v4h-1zM647 87h1v4h-1zM648 84h1v4h-1zM649 84h1v1h-1zM650 83h1v2h-1zM650 81h1v3h-1zM651 79h1v3h-1zM652 79h1v2h-1zM652 80h1v3h-1zM653 82h1v4h-1zM653 82h1v4h-1zM654 79h1v4h-1zM654 77h1v3h-1zM655 76h1v2h-1zM655 76h1v2h-1zM656 77h1v3h-1zM656 77h1v3h-1zM657 76h1v2h-1zM657 74h1v3h-1zM658 73h1v2h-1zM658 73h1v2h-1zM659 74h1v2h-1zM659 75h1v3h-1zM660 77h1v3h-1zM660 76h1v4h-1zM661 73h1v4h-1zM662 73h1v1h-1zM662 73h1v2h-1zM663 74h1v3h-1zM664 76h1v1h-1zM664 75h1v2h-1zM665 74h1v2h-1zM665 73h1v2h-1zM666 72h1v2h-1zM667 72h1v2h-1zM667 73h1v2h-1zM668 74h1v2h-1zM668 73h1v3h-1zM669 72h1v2h-1zM669 72h1v2h-1zM670 73h1v2h-1zM671 74h1v1h-1zM672 74h1v2h-1zM672 75h1v2h-1zM673 76h1v2h-1zM674 77h1v2h-1zM675 78h1v1h-1zM675 76h1v3h-1zM676 75h1v2h-1zM676 75h1v2h-1zM677 76h1v3h-1zM677 77h1v2h-1zM678 76h1v2h-1zM679 76h1v2h-1zM680 77h1v1h-1zM680 75h1v3h-1zM681 74h1v2h-1zM681 74h1v3h-1zM682 76h1v3h-1zM682 73h1v6h-1zM683 69h1v5h-1zM683 69h1v4h-1zM684 72h1v4h-1zM685 75h1v1h-1zM685 75h1v3h-1zM686 77h1v3h-1zM686 75h1v5h-1zM687 72h1v4h-1zM687 72h1v3h-1zM688 74h1v4h-1zM689 77h1v2h-1zM689 75h1v4h-1zM690 72h1v4h-1zM690 72h1v2h-1zM691 73h1v3h-1zM691 74h1v2h-1zM692 73h1v2h-1zM692 73h1v3h-1zM693 75h1v4h-1zM694 77h1v2h-1zM694 74h1v4h-1zM695 71h1v4h-1zM695 71h1v4h-1zM696 74h1v4h-1zM696 77h1v3h-1zM697 79h1v3h-1zM697 77h1v5h-1zM698 74h1v4h-1zM698 74h1v2h-1zM699 75h1v2h-1zM699 73h1v4h-1zM700 70h1v4h-1zM700 70h1v8h-1zM701 77h1v8h-1zM701 81h1v4h-1zM702 79h1v3h-1zM702 79h1v2h-1zM703 80h1v3h-1zM703 77h1v6h-1zM704 73h1v5h-1zM704 72h1v2h-1zM705 71h1v2h-1zM705 71h1v4h-1zM706 74h1v4h-1zM706 77h1v4h-1zM707 80h1v4h-1zM707 80h1v4h-1zM708 77h1v4h-1zM708 77h1v3h-1zM709 79h1v3h-1zM709 81h1v3h-1zM710 83h1v4h-1zM711 86h1v1h-1zM711 84h1v3h-1zM712 82h1v3h-1zM712 82h1v3h-1zM713 84h1v4h-1zM713 85h1v3h-1zM714 84h1v2h-1zM714 83h1v2h-1zM715 82h1v2h-1zM715 82h1v6h-1zM716 87h1v6h-1zM716 86h1v7h-1zM717 80h1v7h-1zM717 80h1v2h-1zM718 81h1v2h-1zM718 80h1v3h-1zM719 79h1v2h-1zM719 79h1v4h-1zM720 82h1v4h-1zM720 85h1v12h-1zM721 96h1v13h-1zM721 102h1v7h-1zM722 96h1v7h-1zM722 87h1v10h-1zM723 78h1v10h-1zM724 78h1v1h-1zM725 78h1v2h-1zM725 76h1v4h-1zM726 74h1v3h-1zM726 74h1v4h-1zM727 77h1v4h-1zM727 78h1v3h-1zM728 77h1v2h-1zM729 77h1v2h-1zM730 78h1v1h-1zM731 77h1v2h-1zM731 77h1v2h-1zM732 78h1v3h-1zM733 79h1v2h-1zM734 78h1v2h-1zM734 78h1v2h-1zM735 79h1v2h-1zM736 79h1v2h-1zM737 79h1v2h-1zM737 80h1v2h-1zM738 81h1v2h-1zM738 82h1v4h-1zM739 85h1v5h-1zM740 89h1v2h-1zM741 89h1v2h-1zM741 89h1v3h-1zM742 91h1v4h-1zM743 94h1v2h-1zM743 93h1v3h-1zM744 92h1v2h-1zM744 92h1v2h-1zM745 93h1v3h-1zM745 95h1v5h-1zM746 99h1v5h-1zM747 103h1v2h-1zM747 104h1v5h-1zM748 108h1v5h-1zM748 105h1v8h-1zM749 99h1v7h-1zM749 99h1v19h-1zM750 117h1v19h-1zM750 135h1v5h-1zM751 139h1v5h-1zM751 130h1v14h-1zM752 118h1v13h-1zM752 118h1v6h-1zM753 123h1v6h-1zM753 110h1v19h-1zM754 92h1v19h-1zM754 92h1v16h-1zM755 107h1v17h-1zM755 121h1v3h-1zM756 119h1v3h-1zM757 119h1v1h-1zM757 108h1v12h-1zM758 97h1v12h-1zM758 97h1v9h-1zM759 105h1v9h-1zM759 107h1v7h-1zM760 102h1v6h-1zM760 99h1v4h-1zM761 97h1v3h-1zM761 90h1v8h-1zM762 84h1v7h-1zM763 83h1v2h-1zM764 83h1v1h-1zM764 81h1v3h-1zM765 79h1v3h-1zM765 79h1v2h-1zM766 80h1v2h-1zM766 77h1v5h-1zM767 73h1v5h-1zM767 73h1v3h-1zM768 75h1v4h-1zM768 78h1v7h-1zM769 84h1v8h-1zM769 86h1v6h-1zM770 81h1v6h-1zM770 81h1v10h-1zM771 90h1v11h-1zM771 95h1v6h-1zM772 90h1v6h-1zM772 87h1v4h-1zM773 84h1v4h-1zM773 84h1v2h-1zM774 85h1v3h-1zM774 84h1v4h-1zM775 82h1v3h-1zM775 82h1v4h-1zM776 85h1v4h-1zM776 86h1v3h-1zM777 85h1v2h-1zM777 80h1v6h-1zM778 75h1v6h-1zM778 75h1v2h-1zM779 76h1v2h-1zM779 77h1v7h-1zM780 83h1v7h-1zM780 85h1v5h-1zM781 81h1v5h-1zM781 79h1v3h-1zM782 77h1v3h-1zM783 77h1v2h-1zM783 78h1v6h-1zM784 83h1v6h-1zM784 83h1v6h-1zM785 78h1v6h-1zM785 78h1v3h-1zM786 80h1v4h-1zM786 80h1v4h-1zM787 77h1v4h-1zM788 77h1v2h-1zM788 76h1v3h-1zM789 75h1v2h-1zM789 73h1v3h-1zM790 72h1v2h-1zM790 72h1v6h-1zM791 77h1v6h-1zM791 77h1v6h-1zM792 73h1v5h-1zM793 73h1v2h-1zM794 74h1v2h-1zM794 74h1v2h-1zM795 73h1v2h-1zM795 73h1v3h-1zM796 75h1v3h-1zM796 77h1v2h-1zM797 78h1v2h-1zM798 78h1v2h-1zM798 78h1v6h-1zM799 83h1v6h-1zM799 81h1v8h-1zM800 75h1v7h-1zM800 75h1v4h-1zM801 78h1v4h-1zM801 80h1v2h-1zM802 79h1v2h-1zM803 78h1v2h-1zM803 77h1v2h-1zM804 76h1v2h-1zM804 76h1v4h-1zM805 79h1v4h-1zM806 81h1v2h-1zM806 78h1v4h-1zM807 75h1v4h-1zM807 75h1v3h-1zM808 77h1v4h-1zM808 79h1v2h-1zM809 78h1v2h-1zM810 78h1v2h-1zM810 79h1v3h-1zM811 81h1v4h-1zM811 81h1v4h-1zM812 79h1v3h-1zM813 78h1v2h-1zM813 78h1v2h-1zM814 79h1v2h-1zM814 76h1v5h-1zM815 72h1v5h-1zM815 72h1v4h-1zM816 75h1v5h-1zM817 79h1v2h-1zM818 79h1v2h-1zM819 79h1v1h-1zM820 79h1v1h-1zM820 79h1v4h-1zM821 82h1v5h-1zM821 83h1v4h-1zM822 80h1v4h-1zM822 79h1v2h-1zM823 78h1v2h-1zM824 78h1v2h-1zM825 79h1v2h-1zM825 79h1v2h-1zM826 78h1v2h-1zM826 78h1v5h-1zM827 82h1v6h-1zM827 80h1v8h-1zM828 74h1v7h-1zM828 74h1v3h-1zM829 76h1v4h-1zM830 78h1v2h-1zM831 78h1v2h-1zM832 79h1v1h-1zM833 78h1v2h-1zM834 78h1v2h-1zM835 79h1v2h-1zM835 78h1v3h-1zM836 77h1v2h-1zM836 77h1v2h-1zM837 78h1v2h-1zM838 78h1v2h-1zM838 78h1v3h-1zM839 80h1v3h-1zM839 78h1v5h-1zM840 74h1v5h-1zM841 73h1v2h-1zM841 73h1v3h-1zM842 75h1v4h-1zM843 78h1v1h-1zM843 76h1v3h-1zM844 74h1v3h-1zM845 74h1v2h-1zM845 75h1v4h-1zM846 78h1v5h-1zM846 78h1v5h-1zM847 74h1v5h-1zM847 74h1v4h-1zM848 77h1v5h-1zM848 78h1v4h-1zM849 75h1v4h-1zM849 73h1v3h-1zM850 71h1v3h-1zM850 71h1v11h-1zM851 81h1v12h-1zM851 92h1v5h-1zM852 96h1v5h-1z"/>
</g>
<rect x="877.00" y="25.00" width="475.00" height="478.00" fill="#b4b4b4" />
<rect x="928.00" y="25.00" width="424.00" height="4.00" fill="#c6c6c6" />
<rect x="924.00" y="25.00" width="4.00" height="4.00" fill="#989898" />
<rect x="877.00" y="25.00" width="1.00" height="478.00" fill="#a8a8a8" />
<rect x="878.00" y="25.00" width="3.00" height="478.00" fill="#c8c8c8" />
<rect x="1346" y="25" width="6" height="478" fill="url(#gR2)"/>
<rect x="884.00" y="38.00" width="350.00" height="288.00" fill="#c0c0c0" />
<rect x="884" y="38" width="13" height="288" fill="url(#gL)"/>
<rect x="1221" y="38" width="13" height="288" fill="url(#gR)"/>
<rect x="884.00" y="38.00" width="350.00" height="1.00" fill="#cacaca" />
<rect x="884.00" y="39.00" width="350.00" height="1.00" fill="#d8d8d8" />
<rect x="884.00" y="324.00" width="350.00" height="2.00" fill="#a4a4a4" />
<rect x="1233.00" y="38.00" width="1.00" height="288.00" fill="#5a5a5a" />
<rect x="929.00" y="48.00" width="281.00" height="253.00" fill="#000" />
<g clip-path="url(#c3)"><ellipse cx="1061" cy="168" rx="130" ry="139" fill="none" stroke="#900000" stroke-width="3"/><ellipse cx="1061" cy="168" rx="125" ry="134" fill="none" stroke="#c00000" stroke-width="3"/><ellipse cx="1060.5" cy="168" rx="121" ry="130" fill="url(#disk)"/></g>
<line x1="923.00" y1="49.50" x2="928.00" y2="49.50" stroke="#000" stroke-width="1"/>
<text x="920.5" y="52.9" font-size="12" text-anchor="end" textLength="12.0" lengthAdjust="spacingAndGlyphs" >20</text>
<line x1="923.00" y1="71.50" x2="928.00" y2="71.50" stroke="#000" stroke-width="1"/>
<text x="920.5" y="75.0" font-size="12" text-anchor="end" textLength="12.0" lengthAdjust="spacingAndGlyphs" >30</text>
<line x1="923.00" y1="93.50" x2="928.00" y2="93.50" stroke="#000" stroke-width="1"/>
<text x="920.5" y="97.2" font-size="12" text-anchor="end" textLength="12.0" lengthAdjust="spacingAndGlyphs" >40</text>
<line x1="923.00" y1="115.50" x2="928.00" y2="115.50" stroke="#000" stroke-width="1"/>
<text x="920.5" y="119.3" font-size="12" text-anchor="end" textLength="12.0" lengthAdjust="spacingAndGlyphs" >50</text>
<line x1="923.00" y1="137.50" x2="928.00" y2="137.50" stroke="#000" stroke-width="1"/>
<text x="920.5" y="141.5" font-size="12" text-anchor="end" textLength="12.0" lengthAdjust="spacingAndGlyphs" >60</text>
<line x1="923.00" y1="159.50" x2="928.00" y2="159.50" stroke="#000" stroke-width="1"/>
<text x="920.5" y="163.7" font-size="12" text-anchor="end" textLength="12.0" lengthAdjust="spacingAndGlyphs" >70</text>
<line x1="923.00" y1="181.50" x2="928.00" y2="181.50" stroke="#000" stroke-width="1"/>
<text x="920.5" y="185.8" font-size="12" text-anchor="end" textLength="12.0" lengthAdjust="spacingAndGlyphs" >80</text>
<line x1="923.00" y1="204.50" x2="928.00" y2="204.50" stroke="#000" stroke-width="1"/>
<text x="920.5" y="207.9" font-size="12" text-anchor="end" textLength="12.0" lengthAdjust="spacingAndGlyphs" >90</text>
<line x1="923.00" y1="226.50" x2="928.00" y2="226.50" stroke="#000" stroke-width="1"/>
<text x="920.5" y="230.1" font-size="12" text-anchor="end" textLength="18.0" lengthAdjust="spacingAndGlyphs" >100</text>
<line x1="923.00" y1="248.50" x2="928.00" y2="248.50" stroke="#000" stroke-width="1"/>
<text x="920.5" y="252.2" font-size="12" text-anchor="end" textLength="18.0" lengthAdjust="spacingAndGlyphs" >110</text>
<line x1="923.00" y1="270.50" x2="928.00" y2="270.50" stroke="#000" stroke-width="1"/>
<text x="920.5" y="274.4" font-size="12" text-anchor="end" textLength="18.0" lengthAdjust="spacingAndGlyphs" >120</text>
<line x1="923.00" y1="301.50" x2="928.00" y2="301.50" stroke="#000" stroke-width="1"/>
<text x="920.5" y="305.4" font-size="12" text-anchor="end" textLength="18.0" lengthAdjust="spacingAndGlyphs" >134</text>
<line x1="923.00" y1="292.50" x2="928.00" y2="292.50" stroke="#000" stroke-width="1"/>
<line x1="929.50" y1="302.00" x2="929.50" y2="307.00" stroke="#000" stroke-width="1"/>
<text x="929.7" y="320.0" font-size="12" text-anchor="middle" textLength="6.0" lengthAdjust="spacingAndGlyphs" >5</text>
<line x1="960.50" y1="302.00" x2="960.50" y2="307.00" stroke="#000" stroke-width="1"/>
<text x="960.9" y="320.0" font-size="12" text-anchor="middle" textLength="12.0" lengthAdjust="spacingAndGlyphs" >20</text>
<line x1="1002.50" y1="302.00" x2="1002.50" y2="307.00" stroke="#000" stroke-width="1"/>
<text x="1002.5" y="320.0" font-size="12" text-anchor="middle" textLength="12.0" lengthAdjust="spacingAndGlyphs" >40</text>
<line x1="1044.50" y1="302.00" x2="1044.50" y2="307.00" stroke="#000" stroke-width="1"/>
<text x="1044.1" y="320.0" font-size="12" text-anchor="middle" textLength="12.0" lengthAdjust="spacingAndGlyphs" >60</text>
<line x1="1085.50" y1="302.00" x2="1085.50" y2="307.00" stroke="#000" stroke-width="1"/>
<text x="1085.7" y="320.0" font-size="12" text-anchor="middle" textLength="12.0" lengthAdjust="spacingAndGlyphs" >80</text>
<line x1="1127.50" y1="302.00" x2="1127.50" y2="307.00" stroke="#000" stroke-width="1"/>
<text x="1127.3" y="320.0" font-size="12" text-anchor="middle" textLength="18.0" lengthAdjust="spacingAndGlyphs" >100</text>
<line x1="1168.50" y1="302.00" x2="1168.50" y2="307.00" stroke="#000" stroke-width="1"/>
<text x="1168.9" y="320.0" font-size="12" text-anchor="middle" textLength="18.0" lengthAdjust="spacingAndGlyphs" >120</text>
<line x1="1210.50" y1="302.00" x2="1210.50" y2="307.00" stroke="#000" stroke-width="1"/>
<text x="1210.5" y="320.0" font-size="12" text-anchor="middle" textLength="18.0" lengthAdjust="spacingAndGlyphs" >140</text>
<rect x="1236.00" y="39.00" width="20.00" height="150.00" fill="#000" />
<rect x="1237.5" y="40.5" width="17" height="147" fill="url(#ramp)"/>
<rect x="1237.50" y="43.00" width="17.00" height="1.80" fill="#000" />
<line x1="1258.00" y1="46.50" x2="1263.00" y2="46.50" stroke="#000" stroke-width="1"/>
<text x="1264.0" y="50.2" font-size="12" textLength="24.0" lengthAdjust="spacingAndGlyphs" >2922</text>
<line x1="1258.00" y1="127.50" x2="1263.00" y2="127.50" stroke="#000" stroke-width="1"/>
<text x="1264.0" y="131.3" font-size="12" textLength="24.0" lengthAdjust="spacingAndGlyphs" >1251</text>
<line x1="1258.00" y1="155.50" x2="1263.00" y2="155.50" stroke="#000" stroke-width="1"/>
<text x="1264.0" y="159.0" font-size="12" textLength="18.0" lengthAdjust="spacingAndGlyphs" >676</text>
<line x1="1258.00" y1="183.50" x2="1263.00" y2="183.50" stroke="#000" stroke-width="1"/>
<text x="1264.0" y="187.6" font-size="12" textLength="12.0" lengthAdjust="spacingAndGlyphs" >65</text>
<line x1="1258.00" y1="176.50" x2="1263.00" y2="176.50" stroke="#000" stroke-width="1"/>
<text x="1313.5" y="73.5" font-size="12" text-anchor="middle" textLength="44.5" lengthAdjust="spacingAndGlyphs" >intensity</text>
<path d="M1301.5 79H1338.7L1335.2 82.5H1305.0Z" fill="#8e8e8e"/>
<path d="M1301.5 79L1305.0 82.5V99.3L1301.5 102.8Z" fill="#a2a2a2"/>
<path d="M1301.5 102.8L1305.0 99.3H1335.2L1338.7 102.8Z" fill="#c6c6c6"/>
<path d="M1338.7 79V102.8L1335.2 99.3V82.5Z" fill="#bcbcbc"/>
<rect x="1305.00" y="82.50" width="30.20" height="16.80" fill="#d4d4d4" />
<text x="1307.0" y="95.0" font-size="12" textLength="18.0" lengthAdjust="spacingAndGlyphs" >480</text>
<text x="1318.0" y="124.0" font-size="12" text-anchor="middle" textLength="32.0" lengthAdjust="spacingAndGlyphs" >radius</text>
<path d="M1301.5 128.5H1338.7L1335.2 132.0H1305.0Z" fill="#8e8e8e"/>
<path d="M1301.5 128.5L1305.0 132.0V148.8L1301.5 152.3Z" fill="#a2a2a2"/>
<path d="M1301.5 152.3L1305.0 148.8H1335.2L1338.7 152.3Z" fill="#c6c6c6"/>
<path d="M1338.7 128.5V152.3L1335.2 148.8V132.0Z" fill="#bcbcbc"/>
<rect x="1305.00" y="132.00" width="30.20" height="16.80" fill="#d4d4d4" />
<text x="1307.0" y="145.0" font-size="12" textLength="18.0" lengthAdjust="spacingAndGlyphs" >120</text>
<text x="1269.0" y="225.2" font-size="12" text-anchor="middle" textLength="32.5" lengthAdjust="spacingAndGlyphs" >center</text>
<rect x="1251.00" y="231.70" width="88.00" height="30.00" fill="#b4b4b4" />
<rect x="1251.00" y="231.70" width="88.00" height="3.00" fill="#a8a8a8" />
<rect x="1251.00" y="231.70" width="3.00" height="30.00" fill="#a8a8a8" />
<rect x="1251.00" y="258.70" width="88.00" height="3.00" fill="#cccccc" />
<rect x="1336.00" y="231.70" width="3.00" height="30.00" fill="#cccccc" />
<path d="M1257.5 234.8H1293.5L1290.0 238.3H1261.0Z" fill="#8e8e8e"/>
<path d="M1257.5 234.8L1261.0 238.3V254.3L1257.5 257.8Z" fill="#a2a2a2"/>
<path d="M1257.5 257.8L1261.0 254.3H1290.0L1293.5 257.8Z" fill="#c6c6c6"/>
<path d="M1293.5 234.8V257.8L1290.0 254.3V238.3Z" fill="#bcbcbc"/>
<rect x="1261.00" y="238.30" width="29.00" height="16.00" fill="#d4d4d4" />
<text x="1262.0" y="251.5" font-size="12" textLength="29.5" lengthAdjust="spacingAndGlyphs" >134.8</text>
<path d="M1298 234.8H1334L1330.5 238.3H1301.5Z" fill="#8e8e8e"/>
<path d="M1298 234.8L1301.5 238.3V254.3L1298 257.8Z" fill="#a2a2a2"/>
<path d="M1298 257.8L1301.5 254.3H1330.5L1334 257.8Z" fill="#c6c6c6"/>
<path d="M1334 234.8V257.8L1330.5 254.3V238.3Z" fill="#bcbcbc"/>
<rect x="1301.50" y="238.30" width="29.00" height="16.00" fill="#d4d4d4" />
<text x="1302.0" y="251.5" font-size="12" textLength="29.5" lengthAdjust="spacingAndGlyphs" >147.9</text>
<text x="1244.5" y="282.4" font-size="12" textLength="45.0" lengthAdjust="spacingAndGlyphs" >last mod</text>
<path d="M1244 286.9H1338L1334.5 290.4H1247.5Z" fill="#8e8e8e"/>
<path d="M1244 286.9L1247.5 290.4V320.9L1244 324.4Z" fill="#a2a2a2"/>
<path d="M1244 324.4L1247.5 320.9H1334.5L1338 324.4Z" fill="#c6c6c6"/>
<path d="M1338 286.9V324.4L1334.5 320.9V290.4Z" fill="#bcbcbc"/>
<rect x="1247.50" y="290.40" width="87.00" height="30.50" fill="#d4d4d4" />
<text x="1249.0" y="303.3" font-size="12" textLength="64.5" lengthAdjust="spacingAndGlyphs" >20:24:03.000</text>
<text x="1249.0" y="318.0" font-size="12" textLength="58.5" lengthAdjust="spacingAndGlyphs" >26/06/2024</text>
<rect x="884.00" y="330.00" width="454.00" height="167.00" fill="#c0c0c0" />
<rect x="884" y="330" width="13" height="167" fill="url(#gL)"/>
<rect x="1325" y="330" width="13" height="167" fill="url(#gR)"/>
<rect x="884.00" y="330.00" width="454.00" height="1.00" fill="#cacaca" />
<rect x="884.00" y="331.00" width="454.00" height="1.00" fill="#d8d8d8" />
<rect x="884.00" y="495.00" width="454.00" height="2.00" fill="#a4a4a4" />
<rect x="1337.00" y="330.00" width="1.00" height="167.00" fill="#6a6a6a" />
<rect x="884.00" y="497.00" width="454.00" height="6.00" fill="#cdcdcd" />
<rect x="931.00" y="339.00" width="383.00" height="116.00" fill="#000" />
<line x1="931.00" y1="339.50" x2="1314.00" y2="339.50" stroke="#404040" stroke-width="1"/>
<line x1="931.50" y1="339.00" x2="931.50" y2="455.00" stroke="#404040" stroke-width="1"/>
<line x1="931.00" y1="455.50" x2="1315.00" y2="455.50" stroke="#e0e0e0" stroke-width="1"/>
<line x1="1314.50" y1="339.00" x2="1314.50" y2="456.00" stroke="#e0e0e0" stroke-width="1"/>
<rect x="943" y="340" width="1" height="115" fill="#003c00"/>
<rect x="949" y="340" width="1" height="115" fill="#003c00"/>
<rect x="954" y="340" width="1" height="115" fill="#003c00"/>
<rect x="959" y="340" width="1" height="115" fill="#003c00"/>
<rect x="965" y="340" width="1" height="115" fill="#006c00"/>
<rect x="970" y="340" width="1" height="115" fill="#003c00"/>
<rect x="976" y="340" width="1" height="115" fill="#003c00"/>
<rect x="981" y="340" width="1" height="115" fill="#003c00"/>
<rect x="986" y="340" width="1" height="115" fill="#003c00"/>
<rect x="992" y="340" width="1" height="115" fill="#006c00"/>
<rect x="997" y="340" width="1" height="115" fill="#003c00"/>
<rect x="1002" y="340" width="1" height="115" fill="#003c00"/>
<rect x="1008" y="340" width="1" height="115" fill="#003c00"/>
<rect x="1013" y="340" width="1" height="115" fill="#003c00"/>
<rect x="1019" y="340" width="1" height="115" fill="#006c00"/>
<rect x="1024" y="340" width="1" height="115" fill="#003c00"/>
<rect x="1029" y="340" width="1" height="115" fill="#003c00"/>
<rect x="1035" y="340" width="1" height="115" fill="#003c00"/>
<rect x="1040" y="340" width="1" height="115" fill="#003c00"/>
<rect x="1046" y="340" width="1" height="115" fill="#006c00"/>
<rect x="1051" y="340" width="1" height="115" fill="#003c00"/>
<rect x="1056" y="340" width="1" height="115" fill="#003c00"/>
<rect x="1062" y="340" width="1" height="115" fill="#003c00"/>
<rect x="1067" y="340" width="1" height="115" fill="#003c00"/>
<rect x="1072" y="340" width="1" height="115" fill="#006c00"/>
<rect x="1078" y="340" width="1" height="115" fill="#003c00"/>
<rect x="1083" y="340" width="1" height="115" fill="#003c00"/>
<rect x="1089" y="340" width="1" height="115" fill="#003c00"/>
<rect x="1094" y="340" width="1" height="115" fill="#003c00"/>
<rect x="1099" y="340" width="1" height="115" fill="#006c00"/>
<rect x="1105" y="340" width="1" height="115" fill="#003c00"/>
<rect x="1110" y="340" width="1" height="115" fill="#003c00"/>
<rect x="1115" y="340" width="1" height="115" fill="#003c00"/>
<rect x="1121" y="340" width="1" height="115" fill="#003c00"/>
<rect x="1126" y="340" width="1" height="115" fill="#006c00"/>
<rect x="1132" y="340" width="1" height="115" fill="#003c00"/>
<rect x="1137" y="340" width="1" height="115" fill="#003c00"/>
<rect x="1142" y="340" width="1" height="115" fill="#003c00"/>
<rect x="1148" y="340" width="1" height="115" fill="#003c00"/>
<rect x="1153" y="340" width="1" height="115" fill="#006c00"/>
<rect x="1158" y="340" width="1" height="115" fill="#003c00"/>
<rect x="1164" y="340" width="1" height="115" fill="#003c00"/>
<rect x="1169" y="340" width="1" height="115" fill="#003c00"/>
<rect x="1175" y="340" width="1" height="115" fill="#003c00"/>
<rect x="1180" y="340" width="1" height="115" fill="#006c00"/>
<rect x="1185" y="340" width="1" height="115" fill="#003c00"/>
<rect x="1191" y="340" width="1" height="115" fill="#003c00"/>
<rect x="1196" y="340" width="1" height="115" fill="#003c00"/>
<rect x="1202" y="340" width="1" height="115" fill="#003c00"/>
<rect x="1207" y="340" width="1" height="115" fill="#006c00"/>
<rect x="1212" y="340" width="1" height="115" fill="#003c00"/>
<rect x="1218" y="340" width="1" height="115" fill="#003c00"/>
<rect x="1223" y="340" width="1" height="115" fill="#003c00"/>
<rect x="1228" y="340" width="1" height="115" fill="#003c00"/>
<rect x="1234" y="340" width="1" height="115" fill="#006c00"/>
<rect x="1239" y="340" width="1" height="115" fill="#003c00"/>
<rect x="1245" y="340" width="1" height="115" fill="#003c00"/>
<rect x="1250" y="340" width="1" height="115" fill="#003c00"/>
<rect x="1255" y="340" width="1" height="115" fill="#003c00"/>
<rect x="1261" y="340" width="1" height="115" fill="#006c00"/>
<rect x="1266" y="340" width="1" height="115" fill="#003c00"/>
<rect x="1271" y="340" width="1" height="115" fill="#003c00"/>
<rect x="1277" y="340" width="1" height="115" fill="#003c00"/>
<rect x="1282" y="340" width="1" height="115" fill="#003c00"/>
<rect x="1288" y="340" width="1" height="115" fill="#006c00"/>
<rect x="1293" y="340" width="1" height="115" fill="#003c00"/>
<rect x="1298" y="340" width="1" height="115" fill="#003c00"/>
<rect x="1304" y="340" width="1" height="115" fill="#003c00"/>
<rect x="1309" y="340" width="1" height="115" fill="#003c00"/>
<rect x="938" y="340" width="1" height="115" fill="#006c00"/>
<rect x="932" y="443" width="382" height="1" fill="#003c00"/>
<rect x="932" y="431" width="382" height="1" fill="#006c00"/>
<rect x="932" y="420" width="382" height="1" fill="#003c00"/>
<rect x="932" y="409" width="382" height="1" fill="#006c00"/>
<rect x="932" y="397" width="382" height="1" fill="#003c00"/>
<rect x="932" y="386" width="382" height="1" fill="#006c00"/>
<rect x="932" y="374" width="382" height="1" fill="#003c00"/>
<rect x="932" y="363" width="382" height="1" fill="#006c00"/>
<rect x="932" y="351" width="382" height="1" fill="#003c00"/>
<text x="929.0" y="459.1" font-size="12" text-anchor="end" textLength="6.0" lengthAdjust="spacingAndGlyphs" >0</text>
<text x="929.0" y="436.2" font-size="12" text-anchor="end" textLength="18.0" lengthAdjust="spacingAndGlyphs" >500</text>
<text x="929.0" y="413.3" font-size="12" text-anchor="end" textLength="24.0" lengthAdjust="spacingAndGlyphs" >1000</text>
<text x="929.0" y="390.5" font-size="12" text-anchor="end" textLength="24.0" lengthAdjust="spacingAndGlyphs" >1500</text>
<text x="929.0" y="367.6" font-size="12" text-anchor="end" textLength="24.0" lengthAdjust="spacingAndGlyphs" >2000</text>
<text x="929.0" y="344.7" font-size="12" text-anchor="end" textLength="24.0" lengthAdjust="spacingAndGlyphs" >2500</text>
<line x1="938.50" y1="457.00" x2="938.50" y2="462.00" stroke="#000" stroke-width="1"/>
<text x="938.9" y="473.6" font-size="12" text-anchor="middle" textLength="6.0" lengthAdjust="spacingAndGlyphs" >0</text>
<line x1="965.50" y1="457.00" x2="965.50" y2="462.00" stroke="#000" stroke-width="1"/>
<text x="965.8" y="473.6" font-size="12" text-anchor="middle" textLength="12.0" lengthAdjust="spacingAndGlyphs" >10</text>
<line x1="992.50" y1="457.00" x2="992.50" y2="462.00" stroke="#000" stroke-width="1"/>
<text x="992.7" y="473.6" font-size="12" text-anchor="middle" textLength="12.0" lengthAdjust="spacingAndGlyphs" >20</text>
<line x1="1019.50" y1="457.00" x2="1019.50" y2="462.00" stroke="#000" stroke-width="1"/>
<text x="1019.6" y="473.6" font-size="12" text-anchor="middle" textLength="12.0" lengthAdjust="spacingAndGlyphs" >30</text>
<line x1="1046.50" y1="457.00" x2="1046.50" y2="462.00" stroke="#000" stroke-width="1"/>
<text x="1046.5" y="473.6" font-size="12" text-anchor="middle" textLength="12.0" lengthAdjust="spacingAndGlyphs" >40</text>
<line x1="1072.50" y1="457.00" x2="1072.50" y2="462.00" stroke="#000" stroke-width="1"/>
<text x="1073.4" y="473.6" font-size="12" text-anchor="middle" textLength="12.0" lengthAdjust="spacingAndGlyphs" >50</text>
<line x1="1099.50" y1="457.00" x2="1099.50" y2="462.00" stroke="#000" stroke-width="1"/>
<text x="1100.3" y="473.6" font-size="12" text-anchor="middle" textLength="12.0" lengthAdjust="spacingAndGlyphs" >60</text>
<line x1="1126.50" y1="457.00" x2="1126.50" y2="462.00" stroke="#000" stroke-width="1"/>
<text x="1127.2" y="473.6" font-size="12" text-anchor="middle" textLength="12.0" lengthAdjust="spacingAndGlyphs" >70</text>
<line x1="1153.50" y1="457.00" x2="1153.50" y2="462.00" stroke="#000" stroke-width="1"/>
<text x="1154.1" y="473.6" font-size="12" text-anchor="middle" textLength="12.0" lengthAdjust="spacingAndGlyphs" >80</text>
<line x1="1180.50" y1="457.00" x2="1180.50" y2="462.00" stroke="#000" stroke-width="1"/>
<text x="1181.0" y="473.6" font-size="12" text-anchor="middle" textLength="12.0" lengthAdjust="spacingAndGlyphs" >90</text>
<line x1="1207.50" y1="457.00" x2="1207.50" y2="462.00" stroke="#000" stroke-width="1"/>
<text x="1207.9" y="473.6" font-size="12" text-anchor="middle" textLength="18.0" lengthAdjust="spacingAndGlyphs" >100</text>
<line x1="1234.50" y1="457.00" x2="1234.50" y2="462.00" stroke="#000" stroke-width="1"/>
<text x="1234.8" y="473.6" font-size="12" text-anchor="middle" textLength="18.0" lengthAdjust="spacingAndGlyphs" >110</text>
<line x1="1261.50" y1="457.00" x2="1261.50" y2="462.00" stroke="#000" stroke-width="1"/>
<text x="1261.7" y="473.6" font-size="12" text-anchor="middle" textLength="18.0" lengthAdjust="spacingAndGlyphs" >120</text>
<line x1="1288.50" y1="457.00" x2="1288.50" y2="462.00" stroke="#000" stroke-width="1"/>
<text x="1288.6" y="473.6" font-size="12" text-anchor="middle" textLength="18.0" lengthAdjust="spacingAndGlyphs" >130</text>
<line x1="1315.50" y1="457.00" x2="1315.50" y2="462.00" stroke="#000" stroke-width="1"/>
<text x="1315.5" y="473.6" font-size="12" text-anchor="middle" textLength="18.0" lengthAdjust="spacingAndGlyphs" >140</text>
<text x="1110.0" y="491.5" font-size="12" text-anchor="middle" textLength="63.0" lengthAdjust="spacingAndGlyphs" >Radius (pix)</text>
<text x="898.0" y="397.0" font-size="12" text-anchor="middle" textLength="55.5" lengthAdjust="spacingAndGlyphs" transform="rotate(-90 898.0 397.0)" >Amplitude</text>
<rect x="1175.00" y="336.00" width="164.00" height="22.00" fill="#c0c0c0" />
<rect x="1175" y="336" width="13" height="22" fill="url(#gL)"/>
<rect x="1324" y="336" width="15" height="22" fill="url(#gRL)"/>
<rect x="1175.00" y="336.00" width="164.00" height="1.00" fill="#cacaca" />
<rect x="1175.00" y="337.00" width="164.00" height="0.50" fill="#d8d8d8" />
<rect x="1175.00" y="356.50" width="164.00" height="1.50" fill="#a4a4a4" />
<text x="1191.0" y="351.5" font-size="12" textLength="24.0" lengthAdjust="spacingAndGlyphs" >Data</text>
<rect x="1225.50" y="339.00" width="29.00" height="16.00" fill="#000" />
<rect x="1237.00" y="341.00" width="3.00" height="1.00" fill="#fff" />
<rect x="1238.00" y="340.00" width="1.00" height="3.00" fill="#fff" />
<rect x="1228.00" y="350.00" width="3.00" height="1.00" fill="#fff" />
<rect x="1229.00" y="349.00" width="1.00" height="3.00" fill="#fff" />
<rect x="1247.00" y="350.00" width="3.00" height="1.00" fill="#fff" />
<rect x="1248.00" y="349.00" width="1.00" height="3.00" fill="#fff" />
<text x="1261.0" y="351.5" font-size="12" textLength="14.0" lengthAdjust="spacingAndGlyphs" >Fit</text>
<rect x="1296.00" y="339.00" width="28.00" height="16.00" fill="#000" />
<polyline points="1298.6,350.5 1311.0,341.2 1322.9,350.5" fill="none" stroke="#ff4848" stroke-width="2" stroke-linejoin="miter" />
<g clip-path="url(#c4)">
<polyline points="938.4,361.0 939.3,361.0 940.3,361.0 941.2,361.0 942.2,361.0 943.1,361.0 944.0,361.0 945.0,361.0 945.9,361.0 946.9,361.0 947.8,361.0 948.8,361.0 949.7,361.0 950.6,361.0 951.6,361.0 952.5,361.0 953.5,361.0 954.4,361.0 955.3,361.0 956.3,361.0 957.2,361.0 958.2,361.0 959.1,361.0 960.1,361.0 961.0,361.0 961.9,361.0 962.9,361.0 963.8,361.0 964.8,361.0 965.7,361.0 966.6,361.0 967.6,361.0 968.5,361.0 969.5,361.0 970.4,361.0 971.4,361.0 972.3,361.0 973.2,361.0 974.2,361.0 975.1,361.0 976.1,361.0 977.0,361.0 977.9,361.0 978.9,361.0 979.8,361.0 980.8,361.0 981.7,361.0 982.7,361.0 983.6,361.0 984.5,361.0 985.5,361.0 986.4,361.0 987.4,361.0 988.3,361.0 989.2,361.0 990.2,361.0 991.1,361.0 992.1,361.0 993.0,361.0 993.9,361.0 994.9,361.0 995.8,361.0 996.8,361.0 997.7,361.0 998.7,361.0 999.6,361.0 1000.5,361.0 1001.5,361.0 1002.4,361.0 1003.4,361.0 1004.3,361.0 1005.2,361.0 1006.2,361.0 1007.1,361.0 1008.1,361.0 1009.0,361.0 1010.0,361.0 1010.9,361.0 1011.8,361.0 1012.8,361.0 1013.7,361.0 1014.7,361.0 1015.6,361.0 1016.5,361.0 1017.5,361.0 1018.4,361.0 1019.4,361.0 1020.3,361.0 1021.3,361.0 1022.2,361.0 1023.1,361.0 1024.1,361.0 1025.0,361.0 1026.0,361.0 1026.9,361.0 1027.8,361.0 1028.8,361.0 1029.7,361.0 1030.7,361.0 1031.6,361.0 1032.5,361.0 1033.5,361.0 1034.4,361.0 1035.4,361.0 1036.3,361.0 1037.3,361.0 1038.2,361.0 1039.1,361.0 1040.1,361.0 1041.0,361.0 1042.0,361.0 1042.9,361.0 1043.8,361.0 1044.8,361.0 1045.7,361.0 1046.7,361.0 1047.6,361.0 1048.6,361.0 1049.5,361.0 1050.4,361.0 1051.4,361.0 1052.3,361.0 1053.3,361.0 1054.2,361.0 1055.1,361.0 1056.1,361.0 1057.0,361.0 1058.0,361.0 1058.9,361.0 1059.9,361.0 1060.8,361.0 1061.7,361.0 1062.7,361.0 1063.6,361.0 1064.6,361.0 1065.5,361.0 1066.4,361.0 1067.4,361.0 1068.3,361.0 1069.3,361.0 1070.2,361.0 1071.2,361.0 1072.1,361.0 1073.0,361.0 1074.0,361.0 1074.9,361.0 1075.9,361.0 1076.8,361.0 1077.7,361.0 1078.7,361.0 1079.6,361.0 1080.6,361.1 1081.5,361.3 1082.4,361.5 1083.4,361.9 1084.3,362.3 1085.3,362.8 1086.2,363.4 1087.2,364.1 1088.1,364.9 1089.0,365.8 1090.0,366.7 1090.9,372.7 1091.9,382.1 1092.8,391.1 1093.7,399.7 1094.7,408.0 1095.6,415.8 1096.6,423.0 1097.5,429.8 1098.5,435.9 1099.4,441.3 1100.3,445.7 1101.3,448.7 1102.2,448.9 1103.2,448.9 1104.1,448.9 1105.0,448.9 1106.0,448.9 1106.9,448.9 1107.9,448.9 1108.8,448.9 1109.8,448.9 1110.7,448.9 1111.6,448.9 1112.6,448.9 1113.5,448.9 1114.5,448.9 1115.4,448.9 1116.3,448.9 1117.3,448.9 1118.2,448.9 1119.2,448.9 1120.1,448.9 1121.1,448.9 1122.0,448.9 1122.9,448.9 1123.9,448.9 1124.8,448.9 1125.8,448.9 1126.7,448.9 1127.6,448.9 1128.6,448.9 1129.5,448.9 1130.5,448.9 1131.4,448.9 1132.3,448.9 1133.3,448.9 1134.2,448.9 1135.2,448.9 1136.1,448.9 1137.1,448.9 1138.0,448.9 1138.9,448.9 1139.9,448.9 1140.8,448.9 1141.8,448.9 1142.7,448.9 1143.6,448.9 1144.6,448.9 1145.5,448.9 1146.5,448.9 1147.4,448.9 1148.4,448.9 1149.3,448.9 1150.2,448.9 1151.2,448.9 1152.1,448.9 1153.1,448.9 1154.0,448.9 1154.9,448.9 1155.9,448.9 1156.8,448.9 1157.8,448.9 1158.7,448.9 1159.7,448.9 1160.6,448.9 1161.5,448.9 1162.5,448.9 1163.4,448.9 1164.4,448.9 1165.3,448.9 1166.2,448.9 1167.2,448.9 1168.1,448.9 1169.1,448.9 1170.0,448.9 1171.0,448.9 1171.9,448.9 1172.8,448.9 1173.8,448.9 1174.7,448.9 1175.7,448.9 1176.6,448.9 1177.5,448.9 1178.5,448.9 1179.4,448.9 1180.4,448.9 1181.3,448.9 1182.2,448.9 1183.2,448.9 1184.1,448.9 1185.1,448.9 1186.0,448.9 1187.0,448.9 1187.9,448.9 1188.8,448.9 1189.8,448.9 1190.7,448.9 1191.7,448.9 1192.6,448.9 1193.5,448.9 1194.5,448.9 1195.4,448.9 1196.4,448.9 1197.3,448.9 1198.3,448.9 1199.2,448.9 1200.1,448.9 1201.1,448.9 1202.0,448.9 1203.0,448.9 1203.9,448.9 1204.8,448.9 1205.8,448.9 1206.7,448.9 1207.7,448.9 1208.6,448.9 1209.6,448.9 1210.5,448.9 1211.4,448.9 1212.4,448.9 1213.3,448.9 1214.3,448.9 1215.2,448.9 1216.1,448.9 1217.1,448.9 1218.0,448.9 1219.0,448.9 1219.9,448.9 1220.8,448.9 1221.8,448.9 1222.7,448.9 1223.7,448.9 1224.6,448.9 1225.6,448.9 1226.5,448.9 1227.4,448.9 1228.4,448.9 1229.3,448.9 1230.3,448.9 1231.2,448.9 1232.1,448.9 1233.1,448.9 1234.0,448.9 1235.0,448.9 1235.9,448.9 1236.9,448.9 1237.8,448.9 1238.7,448.9 1239.7,448.9 1240.6,448.9 1241.6,448.9 1242.5,448.9 1243.4,448.9 1244.4,448.9 1245.3,448.9 1246.3,448.9 1247.2,448.9 1248.2,448.9 1249.1,448.9 1250.0,448.9 1251.0,448.9 1251.9,448.9 1252.9,448.9 1253.8,448.9 1254.7,448.9 1255.7,448.9 1256.6,448.9 1257.6,448.9 1258.5,448.9 1259.5,448.9 1260.4,448.9 1261.3,448.9 1262.3,448.9 1263.2,448.9 1264.2,448.9 1265.1,448.9 1266.0,448.9 1267.0,448.9 1267.9,448.9 1268.9,448.9 1269.8,448.9 1270.7,448.9 1271.7,448.9 1272.6,448.9 1273.6,448.9 1274.5,448.9 1275.5,448.9 1276.4,448.9 1277.3,448.9 1278.3,448.9 1279.2,448.9 1280.2,448.9 1281.1,448.9 1282.0,448.9 1283.0,448.9 1283.9,448.9 1284.9,448.9 1285.8,448.9 1286.8,448.9 1287.7,448.9 1288.6,448.9 1289.6,448.9 1290.5,448.9 1291.5,448.9 1292.4,448.9 1293.3,448.9 1294.3,448.9 1295.2,448.9 1296.2,448.9" fill="none" stroke="#ff4848" stroke-width="2" stroke-linejoin="miter" />
<path fill="#fff" d="M937 369h3v1h-3zM938 368h1v3h-1zM939 367h3v1h-3zM940 366h1v3h-1zM942 368h3v1h-3zM943 367h1v3h-1zM945 366h3v1h-3zM946 365h1v3h-1zM947 368h3v1h-3zM948 367h1v3h-1zM950 368h3v1h-3zM951 367h1v3h-1zM953 367h3v1h-3zM954 366h1v3h-1zM956 368h3v1h-3zM957 367h1v3h-1zM958 368h3v1h-3zM959 367h1v3h-1zM961 367h3v1h-3zM962 366h1v3h-1zM964 368h3v1h-3zM965 367h1v3h-1zM966 369h3v1h-3zM967 368h1v3h-1zM969 369h3v1h-3zM970 368h1v3h-1zM972 369h3v1h-3zM973 368h1v3h-1zM974 368h3v1h-3zM975 367h1v3h-1zM977 367h3v1h-3zM978 366h1v3h-1zM980 367h3v1h-3zM981 366h1v3h-1zM982 367h3v1h-3zM983 366h1v3h-1zM985 367h3v1h-3zM986 366h1v3h-1zM988 366h3v1h-3zM989 365h1v3h-1zM990 366h3v1h-3zM991 365h1v3h-1zM993 365h3v1h-3zM994 364h1v3h-1zM996 365h3v1h-3zM997 364h1v3h-1zM999 365h3v1h-3zM1000 364h1v3h-1zM1001 364h3v1h-3zM1002 363h1v3h-1zM1004 363h3v1h-3zM1005 362h1v3h-1zM1007 362h3v1h-3zM1008 361h1v3h-1zM1009 363h3v1h-3zM1010 362h1v3h-1zM1012 362h3v1h-3zM1013 361h1v3h-1zM1015 363h3v1h-3zM1016 362h1v3h-1zM1017 361h3v1h-3zM1018 360h1v3h-1zM1020 362h3v1h-3zM1021 361h1v3h-1zM1023 361h3v1h-3zM1024 360h1v3h-1zM1025 359h3v1h-3zM1026 358h1v3h-1zM1028 361h3v1h-3zM1029 360h1v3h-1zM1031 359h3v1h-3zM1032 358h1v3h-1zM1034 359h3v1h-3zM1035 358h1v3h-1zM1036 359h3v1h-3zM1037 358h1v3h-1zM1039 358h3v1h-3zM1040 357h1v3h-1zM1042 358h3v1h-3zM1043 357h1v3h-1zM1044 357h3v1h-3zM1045 356h1v3h-1zM1047 358h3v1h-3zM1048 357h1v3h-1zM1050 357h3v1h-3zM1051 356h1v3h-1zM1052 357h3v1h-3zM1053 356h1v3h-1zM1055 356h3v1h-3zM1056 355h1v3h-1zM1058 355h3v1h-3zM1059 354h1v3h-1zM1060 355h3v1h-3zM1061 354h1v3h-1zM1063 353h3v1h-3zM1064 352h1v3h-1zM1066 354h3v1h-3zM1067 353h1v3h-1zM1069 353h3v1h-3zM1070 352h1v3h-1zM1071 352h3v1h-3zM1072 351h1v3h-1zM1074 353h3v1h-3zM1075 352h1v3h-1zM1077 349h3v1h-3zM1078 348h1v3h-1zM1079 351h3v1h-3zM1080 350h1v3h-1zM1082 349h3v1h-3zM1083 348h1v3h-1zM1085 348h3v1h-3zM1086 347h1v3h-1zM1087 352h3v1h-3zM1088 351h1v3h-1zM1090 369h3v1h-3zM1091 368h1v3h-1zM1093 391h3v1h-3zM1094 390h1v3h-1zM1095 415h3v1h-3zM1096 414h1v3h-1zM1098 427h3v1h-3zM1099 426h1v3h-1zM1101 435h3v1h-3zM1102 434h1v3h-1zM1103 432h3v1h-3zM1104 431h1v3h-1zM1106 427h3v1h-3zM1107 426h1v3h-1zM1109 430h3v1h-3zM1110 429h1v3h-1zM1112 443h3v1h-3zM1113 442h1v3h-1zM1114 449h3v1h-3zM1115 448h1v3h-1zM1117 449h3v1h-3zM1118 448h1v3h-1zM1120 446h3v1h-3zM1121 445h1v3h-1zM1122 444h3v1h-3zM1123 443h1v3h-1zM1125 445h3v1h-3zM1126 444h1v3h-1zM1128 446h3v1h-3zM1129 445h1v3h-1zM1130 448h3v1h-3zM1131 447h1v3h-1zM1133 448h3v1h-3zM1134 447h1v3h-1zM1136 449h3v1h-3zM1137 448h1v3h-1zM1138 449h3v1h-3zM1139 448h1v3h-1zM1141 450h3v1h-3zM1142 449h1v3h-1zM1144 450h3v1h-3zM1145 449h1v3h-1zM1147 450h3v1h-3zM1148 449h1v3h-1zM1149 450h3v1h-3zM1150 449h1v3h-1zM1152 450h3v1h-3zM1153 449h1v3h-1zM1155 450h3v1h-3zM1156 449h1v3h-1zM1157 450h3v1h-3zM1158 449h1v3h-1zM1160 450h3v1h-3zM1161 449h1v3h-1zM1163 450h3v1h-3zM1164 449h1v3h-1zM1165 450h3v1h-3zM1166 449h1v3h-1zM1168 450h3v1h-3zM1169 449h1v3h-1zM1171 450h3v1h-3zM1172 449h1v3h-1zM1173 450h3v1h-3zM1174 449h1v3h-1zM1176 450h3v1h-3zM1177 449h1v3h-1zM1179 450h3v1h-3zM1180 449h1v3h-1zM1181 450h3v1h-3zM1182 449h1v3h-1zM1184 450h3v1h-3zM1185 449h1v3h-1zM1187 450h3v1h-3zM1188 449h1v3h-1zM1190 450h3v1h-3zM1191 449h1v3h-1zM1192 450h3v1h-3zM1193 449h1v3h-1zM1195 450h3v1h-3zM1196 449h1v3h-1zM1198 450h3v1h-3zM1199 449h1v3h-1zM1200 450h3v1h-3zM1201 449h1v3h-1zM1203 450h3v1h-3zM1204 449h1v3h-1zM1206 450h3v1h-3zM1207 449h1v3h-1zM1208 450h3v1h-3zM1209 449h1v3h-1zM1211 450h3v1h-3zM1212 449h1v3h-1zM1214 450h3v1h-3zM1215 449h1v3h-1zM1216 450h3v1h-3zM1217 449h1v3h-1zM1219 450h3v1h-3zM1220 449h1v3h-1zM1222 450h3v1h-3zM1223 449h1v3h-1zM1225 450h3v1h-3zM1226 449h1v3h-1zM1227 450h3v1h-3zM1228 449h1v3h-1zM1230 450h3v1h-3zM1231 449h1v3h-1zM1233 450h3v1h-3zM1234 449h1v3h-1zM1235 450h3v1h-3zM1236 449h1v3h-1zM1238 450h3v1h-3zM1239 449h1v3h-1zM1241 450h3v1h-3zM1242 449h1v3h-1zM1243 450h3v1h-3zM1244 449h1v3h-1zM1246 450h3v1h-3zM1247 449h1v3h-1zM1249 450h3v1h-3zM1250 449h1v3h-1zM1251 450h3v1h-3zM1252 449h1v3h-1zM1254 450h3v1h-3zM1255 449h1v3h-1zM1257 450h3v1h-3zM1258 449h1v3h-1zM1259 450h3v1h-3zM1260 449h1v3h-1zM1262 450h3v1h-3zM1263 449h1v3h-1zM1265 450h3v1h-3zM1266 449h1v3h-1zM1268 450h3v1h-3zM1269 449h1v3h-1zM1270 450h3v1h-3zM1271 449h1v3h-1zM1273 450h3v1h-3zM1274 449h1v3h-1zM1276 450h3v1h-3zM1277 449h1v3h-1zM1278 450h3v1h-3zM1279 449h1v3h-1zM1281 450h3v1h-3zM1282 449h1v3h-1zM1284 450h3v1h-3zM1285 449h1v3h-1zM1286 450h3v1h-3zM1287 449h1v3h-1zM1289 450h3v1h-3zM1290 449h1v3h-1zM1292 450h3v1h-3zM1293 449h1v3h-1zM1294 450h3v1h-3zM1295 449h1v3h-1z"/>
</g>
<rect x="1352.00" y="0.00" width="763.00" height="336.00" fill="#b4b4b4" />
<rect x="2109" y="0" width="6" height="336" fill="url(#gR2)"/>
<path d="M1352 0H2115L2111 4H1352Z" fill="#c6c6c6"/>
<rect x="1352.00" y="0.00" width="1.00" height="336.00" fill="#a0a0a0" />
<rect x="1353.00" y="0.00" width="3.00" height="336.00" fill="#cccccc" />
<rect x="1352.00" y="332.00" width="763.00" height="4.00" fill="#9c9c9c" />
<text x="1366.0" y="48.4" font-size="12" textLength="59.0" lengthAdjust="spacingAndGlyphs" >StoredWfm</text>
<rect x="1365.00" y="52.00" width="166.00" height="94.00" fill="#000" />
<rect x="1366.00" y="53.00" width="164.00" height="92.00" fill="#b8b8b8" />
<rect x="1366.00" y="53.00" width="164.00" height="1.50" fill="#e8e8e8" />
<rect x="1366.00" y="53.00" width="1.50" height="92.00" fill="#e8e8e8" />
<rect x="1366.00" y="142.50" width="164.00" height="2.50" fill="#7a7a7a" />
<rect x="1527.50" y="53.00" width="2.50" height="92.00" fill="#7a7a7a" />
<text x="1371.0" y="69.3" font-size="12" textLength="11.5" lengthAdjust="spacingAndGlyphs" font-weight="bold" >t0</text>
<rect x="1370.00" y="74.20" width="90.00" height="31.00" fill="#8a8a8a" />
<rect x="1371.00" y="75.20" width="89.00" height="30.00" fill="#e4e4e4" />
<rect x="1371.00" y="75.20" width="88.00" height="29.00" fill="#bdbdbd" />
<text x="1380.5" y="88.2" font-size="12" textLength="42.0" lengthAdjust="spacingAndGlyphs" >20:24:02</text>
<text x="1380.5" y="102.5" font-size="12" textLength="58.0" lengthAdjust="spacingAndGlyphs" >26/06/2024</text>
<text x="1371.0" y="117.3" font-size="12" textLength="11.5" lengthAdjust="spacingAndGlyphs" font-weight="bold" >dt</text>
<rect x="1370.00" y="121.60" width="90.00" height="18.50" fill="#8a8a8a" />
<rect x="1371.00" y="122.60" width="89.00" height="17.50" fill="#e4e4e4" />
<rect x="1371.00" y="122.60" width="88.00" height="16.50" fill="#bdbdbd" />
<text x="1379.0" y="135.5" font-size="12" textLength="45.5" lengthAdjust="spacingAndGlyphs" >0.000000</text>
<text x="1465.0" y="71.5" font-size="12" textLength="6.5" lengthAdjust="spacingAndGlyphs" font-weight="bold" >Y</text>
<rect x="1476.00" y="58.00" width="48.50" height="18.50" fill="#8a8a8a" />
<rect x="1477.00" y="59.00" width="47.50" height="17.50" fill="#e4e4e4" />
<rect x="1477.00" y="59.00" width="46.50" height="16.50" fill="#bdbdbd" />
<rect x="1477.50" y="59.50" width="8.00" height="15.00" fill="#d0d0d0" />
<path d="M1479 66h5l-2.5-4z M1479 69h5l-2.5 4z" fill="#000"/>
<text x="1488.5" y="72.0" font-size="12" textLength="6.0" lengthAdjust="spacingAndGlyphs" >0</text>
<rect x="1464.00" y="78.00" width="60.00" height="62.00" fill="#a8a8a8" />
<rect x="1464.00" y="78.00" width="60.00" height="1.00" fill="#808080" />
<rect x="1464.00" y="78.00" width="1.00" height="62.00" fill="#808080" />
<rect x="1467.00" y="81.00" width="55.00" height="18.30" fill="#8a8a8a" />
<rect x="1468.00" y="82.00" width="54.00" height="17.30" fill="#e4e4e4" />
<rect x="1468.00" y="82.00" width="53.00" height="16.30" fill="#bdbdbd" />
<text x="1469.5" y="94.5" font-size="12" textLength="49.5" lengthAdjust="spacingAndGlyphs" >-0.001804</text>
<rect x="1467.00" y="100.10" width="55.00" height="18.30" fill="#8a8a8a" />
<rect x="1468.00" y="101.10" width="54.00" height="17.30" fill="#e4e4e4" />
<rect x="1468.00" y="101.10" width="53.00" height="16.30" fill="#bdbdbd" />
<text x="1469.5" y="113.6" font-size="12" textLength="49.5" lengthAdjust="spacingAndGlyphs" >-0.001852</text>
<rect x="1467.00" y="119.20" width="55.00" height="18.30" fill="#8a8a8a" />
<rect x="1468.00" y="120.20" width="54.00" height="17.30" fill="#e4e4e4" />
<rect x="1468.00" y="120.20" width="53.00" height="16.30" fill="#bdbdbd" />
<text x="1469.5" y="132.7" font-size="12" textLength="49.5" lengthAdjust="spacingAndGlyphs" >-0.001929</text>
<text x="1414.5" y="200.4" font-size="12" text-anchor="middle" textLength="87.0" lengthAdjust="spacingAndGlyphs" >Space charge (V)</text>
<path d="M1384.1 204.3H1437.9L1434.3000000000002 207.9H1387.6999999999998Z" fill="#8e8e8e"/>
<path d="M1384.1 204.3L1387.6999999999998 207.9V225.4L1384.1 229Z" fill="#a2a2a2"/>
<path d="M1384.1 229L1387.6999999999998 225.4H1434.3000000000002L1437.9 229Z" fill="#c6c6c6"/>
<path d="M1437.9 204.3V229L1434.3000000000002 225.4V207.9Z" fill="#bcbcbc"/>
<rect x="1387.70" y="207.90" width="46.60" height="17.50" fill="#d4d4d4" />
<text x="1390.0" y="221.0" font-size="12" textLength="22.0" lengthAdjust="spacingAndGlyphs" >2.79</text>
<text x="1509.0" y="200.4" font-size="12" text-anchor="middle" textLength="57.0" lengthAdjust="spacingAndGlyphs" >dV/dt (V/s)</text>
<rect x="1467.00" y="203.00" width="12.80" height="24.50" fill="#c8c8c8" />
<ellipse cx="1473.4" cy="215.2" rx="6" ry="12" fill="#cfcfcf" stroke="#9a9a9a" stroke-width="1"/>
<path d="M1470.5 212.5h6l-3-5z M1470.5 218h6l-3 5z" fill="#8a8a8a"/>
<path d="M1479.6 203H1533L1529.5 206.5H1483.1Z" fill="#8e8e8e"/>
<path d="M1479.6 203L1483.1 206.5V224.2L1479.6 227.7Z" fill="#a2a2a2"/>
<path d="M1479.6 227.7L1483.1 224.2H1529.5L1533 227.7Z" fill="#c6c6c6"/>
<path d="M1533 203V227.7L1529.5 224.2V206.5Z" fill="#bcbcbc"/>
<rect x="1483.10" y="206.50" width="46.40" height="17.70" fill="#ffffff" />
<text x="1485.0" y="220.5" font-size="12" textLength="27.0" lengthAdjust="spacingAndGlyphs" >13.2k</text>
<text x="1458.0" y="263.0" font-size="16" text-anchor="middle" textLength="112.0" lengthAdjust="spacingAndGlyphs" >Temperature (K)</text>
<path d="M1426 269.5H1497.5L1493.9 273.1H1429.6Z" fill="#8e8e8e"/>
<path d="M1426 269.5L1429.6 273.1V295.4L1426 299Z" fill="#a2a2a2"/>
<path d="M1426 299L1429.6 295.4H1493.9L1497.5 299Z" fill="#c6c6c6"/>
<path d="M1497.5 269.5V299L1493.9 295.4V273.1Z" fill="#bcbcbc"/>
<rect x="1429.60" y="273.10" width="64.30" height="22.30" fill="#d4d4d4" />
<text x="1433.5" y="290.2" font-size="16" textLength="35.0" lengthAdjust="spacingAndGlyphs" >1820</text>
<text x="1566.0" y="30.5" font-size="12" textLength="49.0" lengthAdjust="spacingAndGlyphs" >AnalWfm</text>
<rect x="1557.50" y="36.00" width="503.50" height="284.00" fill="#c0c0c0" />
<rect x="1557.5" y="36" width="12" height="284" fill="url(#gL)"/>
<rect x="2049.0" y="36" width="12" height="284" fill="url(#gR)"/>
<rect x="1557.50" y="36.00" width="503.50" height="1.00" fill="#cacaca" />
<rect x="1557.50" y="37.00" width="503.50" height="1.00" fill="#d8d8d8" />
<rect x="1557.50" y="318.00" width="503.50" height="2.00" fill="#a4a4a4" />
<rect x="1644.00" y="45.00" width="392.50" height="233.00" fill="#000" />
<line x1="1644.00" y1="45.50" x2="2036.50" y2="45.50" stroke="#404040" stroke-width="1"/>
<line x1="1644.50" y1="45.00" x2="1644.50" y2="278.00" stroke="#404040" stroke-width="1"/>
<line x1="1644.00" y1="278.50" x2="2037.50" y2="278.50" stroke="#e0e0e0" stroke-width="1"/>
<line x1="2037.00" y1="45.00" x2="2037.00" y2="279.00" stroke="#e0e0e0" stroke-width="1"/>
<rect x="1653" y="46" width="1" height="232" fill="#003c00"/>
<rect x="1661" y="46" width="1" height="232" fill="#003c00"/>
<rect x="1668" y="46" width="1" height="232" fill="#003c00"/>
<rect x="1676" y="46" width="1" height="232" fill="#003c00"/>
<rect x="1684" y="46" width="1" height="232" fill="#003c00"/>
<rect x="1692" y="46" width="1" height="232" fill="#003c00"/>
<rect x="1700" y="46" width="1" height="232" fill="#003c00"/>
<rect x="1707" y="46" width="1" height="232" fill="#003c00"/>
<rect x="1715" y="46" width="1" height="232" fill="#003c00"/>
<rect x="1723" y="46" width="1" height="232" fill="#006c00"/>
<rect x="1731" y="46" width="1" height="232" fill="#003c00"/>
<rect x="1739" y="46" width="1" height="232" fill="#003c00"/>
<rect x="1747" y="46" width="1" height="232" fill="#003c00"/>
<rect x="1754" y="46" width="1" height="232" fill="#003c00"/>
<rect x="1762" y="46" width="1" height="232" fill="#003c00"/>
<rect x="1770" y="46" width="1" height="232" fill="#003c00"/>
<rect x="1778" y="46" width="1" height="232" fill="#003c00"/>
<rect x="1786" y="46" width="1" height="232" fill="#003c00"/>
<rect x="1793" y="46" width="1" height="232" fill="#003c00"/>
<rect x="1801" y="46" width="1" height="232" fill="#006c00"/>
<rect x="1809" y="46" width="1" height="232" fill="#003c00"/>
<rect x="1817" y="46" width="1" height="232" fill="#003c00"/>
<rect x="1825" y="46" width="1" height="232" fill="#003c00"/>
<rect x="1833" y="46" width="1" height="232" fill="#003c00"/>
<rect x="1840" y="46" width="1" height="232" fill="#003c00"/>
<rect x="1848" y="46" width="1" height="232" fill="#003c00"/>
<rect x="1856" y="46" width="1" height="232" fill="#003c00"/>
<rect x="1864" y="46" width="1" height="232" fill="#003c00"/>
<rect x="1872" y="46" width="1" height="232" fill="#003c00"/>
<rect x="1880" y="46" width="1" height="232" fill="#006c00"/>
<rect x="1887" y="46" width="1" height="232" fill="#003c00"/>
<rect x="1895" y="46" width="1" height="232" fill="#003c00"/>
<rect x="1903" y="46" width="1" height="232" fill="#003c00"/>
<rect x="1911" y="46" width="1" height="232" fill="#003c00"/>
<rect x="1919" y="46" width="1" height="232" fill="#003c00"/>
<rect x="1926" y="46" width="1" height="232" fill="#003c00"/>
<rect x="1934" y="46" width="1" height="232" fill="#003c00"/>
<rect x="1942" y="46" width="1" height="232" fill="#003c00"/>
<rect x="1950" y="46" width="1" height="232" fill="#003c00"/>
<rect x="1958" y="46" width="1" height="232" fill="#006c00"/>
<rect x="1966" y="46" width="1" height="232" fill="#003c00"/>
<rect x="1973" y="46" width="1" height="232" fill="#003c00"/>
<rect x="1981" y="46" width="1" height="232" fill="#003c00"/>
<rect x="1989" y="46" width="1" height="232" fill="#003c00"/>
<rect x="1997" y="46" width="1" height="232" fill="#003c00"/>
<rect x="2005" y="46" width="1" height="232" fill="#003c00"/>
<rect x="2012" y="46" width="1" height="232" fill="#003c00"/>
<rect x="2020" y="46" width="1" height="232" fill="#003c00"/>
<rect x="2028" y="46" width="1" height="232" fill="#003c00"/>
<rect x="1645" y="264" width="391" height="1" fill="#003c00"/>
<rect x="1645" y="250" width="391" height="1" fill="#003c00"/>
<rect x="1645" y="242" width="391" height="1" fill="#003c00"/>
<rect x="1645" y="237" width="391" height="1" fill="#003c00"/>
<rect x="1645" y="232" width="391" height="1" fill="#006c00"/>
<rect x="1645" y="218" width="391" height="1" fill="#003c00"/>
<rect x="1645" y="205" width="391" height="1" fill="#003c00"/>
<rect x="1645" y="197" width="391" height="1" fill="#003c00"/>
<rect x="1645" y="191" width="391" height="1" fill="#003c00"/>
<rect x="1645" y="186" width="391" height="1" fill="#006c00"/>
<rect x="1645" y="173" width="391" height="1" fill="#003c00"/>
<rect x="1645" y="159" width="391" height="1" fill="#003c00"/>
<rect x="1645" y="151" width="391" height="1" fill="#003c00"/>
<rect x="1645" y="145" width="391" height="1" fill="#003c00"/>
<rect x="1645" y="141" width="391" height="1" fill="#006c00"/>
<rect x="1645" y="127" width="391" height="1" fill="#003c00"/>
<rect x="1645" y="113" width="391" height="1" fill="#003c00"/>
<rect x="1645" y="105" width="391" height="1" fill="#003c00"/>
<rect x="1645" y="99" width="391" height="1" fill="#003c00"/>
<rect x="1645" y="95" width="391" height="1" fill="#006c00"/>
<rect x="1645" y="81" width="391" height="1" fill="#003c00"/>
<rect x="1645" y="67" width="391" height="1" fill="#003c00"/>
<rect x="1645" y="59" width="391" height="1" fill="#003c00"/>
<rect x="1645" y="54" width="391" height="1" fill="#003c00"/>
<rect x="1645" y="49" width="391" height="1" fill="#006c00"/>
<rect x="1645" y="49" width="391" height="1" fill="#006c00"/>
<line x1="1638.00" y1="46.50" x2="1643.00" y2="46.50" stroke="#000" stroke-width="1"/>
<text x="1635.5" y="50.4" font-size="12" text-anchor="end" textLength="12.5" lengthAdjust="spacingAndGlyphs" >12</text>
<line x1="1638.00" y1="95.50" x2="1643.00" y2="95.50" stroke="#000" stroke-width="1"/>
<text x="1635.5" y="99.8" font-size="12" text-anchor="end" textLength="6.5" lengthAdjust="spacingAndGlyphs" >1</text>
<line x1="1638.00" y1="141.50" x2="1643.00" y2="141.50" stroke="#000" stroke-width="1"/>
<text x="1635.5" y="145.5" font-size="12" text-anchor="end" textLength="15.1" lengthAdjust="spacingAndGlyphs" >0.1</text>
<line x1="1638.00" y1="186.50" x2="1643.00" y2="186.50" stroke="#000" stroke-width="1"/>
<text x="1635.5" y="191.2" font-size="12" text-anchor="end" textLength="21.1" lengthAdjust="spacingAndGlyphs" >0.01</text>
<line x1="1638.00" y1="232.50" x2="1643.00" y2="232.50" stroke="#000" stroke-width="1"/>
<text x="1635.5" y="237.0" font-size="12" text-anchor="end" textLength="27.1" lengthAdjust="spacingAndGlyphs" >0.001</text>
<line x1="1638.00" y1="278.50" x2="1643.00" y2="278.50" stroke="#000" stroke-width="1"/>
<text x="1635.5" y="282.7" font-size="12" text-anchor="end" textLength="33.1" lengthAdjust="spacingAndGlyphs" >0.0001</text>
<line x1="1638.00" y1="49.50" x2="1643.00" y2="49.50" stroke="#000" stroke-width="1"/>
<line x1="1645.50" y1="280.00" x2="1645.50" y2="284.00" stroke="#000" stroke-width="1"/>
<text x="1644.4" y="296.2" font-size="12" text-anchor="middle" textLength="6.5" lengthAdjust="spacingAndGlyphs" >0</text>
<line x1="1723.50" y1="280.00" x2="1723.50" y2="284.00" stroke="#000" stroke-width="1"/>
<text x="1722.6" y="296.2" font-size="12" text-anchor="middle" textLength="33.1" lengthAdjust="spacingAndGlyphs" >0.0001</text>
<line x1="1801.50" y1="280.00" x2="1801.50" y2="284.00" stroke="#000" stroke-width="1"/>
<text x="1800.8" y="296.2" font-size="12" text-anchor="middle" textLength="33.1" lengthAdjust="spacingAndGlyphs" >0.0002</text>
<line x1="1880.50" y1="280.00" x2="1880.50" y2="284.00" stroke="#000" stroke-width="1"/>
<text x="1879.0" y="296.2" font-size="12" text-anchor="middle" textLength="33.1" lengthAdjust="spacingAndGlyphs" >0.0003</text>
<line x1="1958.50" y1="280.00" x2="1958.50" y2="284.00" stroke="#000" stroke-width="1"/>
<text x="1957.2" y="296.2" font-size="12" text-anchor="middle" textLength="33.1" lengthAdjust="spacingAndGlyphs" >0.0004</text>
<line x1="2036.50" y1="280.00" x2="2036.50" y2="284.00" stroke="#000" stroke-width="1"/>
<text x="2035.4" y="296.2" font-size="12" text-anchor="middle" textLength="33.1" lengthAdjust="spacingAndGlyphs" >0.0005</text>
<text x="1840.0" y="313.5" font-size="12" text-anchor="middle" textLength="41.0" lengthAdjust="spacingAndGlyphs" >Time (s)</text>
<text x="1597.0" y="166.0" font-size="12" text-anchor="middle" textLength="71.0" lengthAdjust="spacingAndGlyphs" transform="rotate(-90 1597.0 166.0)" >Amplitude (V)</text>
<rect x="1905.00" y="11.00" width="169.00" height="23.00" fill="#c0c0c0" />
<rect x="1905" y="11" width="11" height="23" fill="url(#gL)"/>
<rect x="2060" y="11" width="14" height="23" fill="url(#gRL)"/>
<rect x="1905.00" y="11.00" width="169.00" height="1.00" fill="#cacaca" />
<rect x="1905.00" y="12.00" width="169.00" height="0.00" fill="#d8d8d8" />
<rect x="1905.00" y="32.00" width="169.00" height="2.00" fill="#a4a4a4" />
<text x="1920.4" y="25.7" font-size="12" textLength="26.0" lengthAdjust="spacingAndGlyphs" >SiPM</text>
<rect x="1958.30" y="13.40" width="28.00" height="17.60" fill="#000" />
<rect x="1969.00" y="14.50" width="2.00" height="2.00" fill="#fff" />
<rect x="1959.40" y="24.70" width="2.00" height="2.00" fill="#fff" />
<rect x="1979.00" y="24.70" width="2.00" height="2.00" fill="#fff" />
<text x="1993.6" y="25.7" font-size="12" textLength="13.0" lengthAdjust="spacingAndGlyphs" >Fit</text>
<rect x="2031.40" y="13.40" width="28.00" height="17.60" fill="#000" />
<polyline points="2033.2,27.4 2047.5,15.5 2058.0,25.0" fill="none" stroke="#ff4848" stroke-width="2" stroke-linejoin="miter" />
<g clip-path="url(#c5)">
<rect x="1656" y="46" width="1" height="232" fill="#ffff00"/>
<rect x="1815" y="46" width="1" height="232" fill="#80ff40"/>
<rect x="1836" y="46" width="1" height="232" fill="#ff2020"/>
<polyline points="1742.3,279.0 1854.0,45.0" fill="none" stroke="#ff4848" stroke-width="2.8" stroke-linejoin="miter" />
<path fill="#fff" d="M1655 279h2v3h-2zM1655 273h2v3h-2zM1656 267h2v3h-2zM1656 253h2v3h-2zM1657 238h2v3h-2zM1657 236h2v3h-2zM1658 237h2v3h-2zM1658 240h2v3h-2zM1659 245h2v3h-2zM1659 252h2v3h-2zM1660 259h2v3h-2zM1660 247h2v3h-2zM1661 235h2v3h-2zM1661 229h2v3h-2zM1662 224h2v3h-2zM1662 222h2v3h-2zM1663 220h2v3h-2zM1663 220h2v3h-2zM1664 220h2v3h-2zM1664 220h2v3h-2zM1665 220h2v3h-2zM1665 220h2v3h-2zM1666 221h2v3h-2zM1666 221h2v3h-2zM1667 222h2v3h-2zM1667 225h2v3h-2zM1668 229h2v3h-2zM1668 237h2v3h-2zM1669 245h2v3h-2zM1669 251h2v3h-2zM1670 268h2v3h-2zM1676 281h2v3h-2zM1677 267h2v3h-2zM1677 253h2v3h-2zM1678 236h2v3h-2zM1678 225h2v3h-2zM1679 218h2v3h-2zM1679 215h2v3h-2zM1680 215h2v3h-2zM1680 217h2v3h-2zM1681 220h2v3h-2zM1681 228h2v3h-2zM1682 236h2v3h-2zM1682 244h2v3h-2zM1683 262h2v3h-2zM1719 281h2v3h-2zM1720 260h2v3h-2zM1720 245h2v3h-2zM1721 243h2v3h-2zM1721 248h2v3h-2zM1722 250h2v3h-2zM1722 247h2v3h-2zM1723 242h2v3h-2zM1723 238h2v3h-2zM1724 233h2v3h-2zM1724 229h2v3h-2zM1725 226h2v3h-2zM1725 224h2v3h-2zM1726 223h2v3h-2zM1726 223h2v3h-2zM1727 223h2v3h-2zM1727 225h2v3h-2zM1728 240h2v3h-2zM1728 248h2v3h-2zM1729 269h2v3h-2zM1737 281h2v3h-2zM1738 238h2v3h-2zM1738 220h2v3h-2zM1738 213h2v3h-2zM1739 209h2v3h-2zM1739 207h2v3h-2zM1740 206h2v3h-2zM1740 206h2v3h-2zM1740 206h2v3h-2zM1741 205h2v3h-2zM1741 203h2v3h-2zM1742 200h2v3h-2zM1742 195h2v3h-2zM1742 190h2v3h-2zM1743 187h2v3h-2zM1743 184h2v3h-2zM1744 183h2v3h-2zM1744 182h2v3h-2zM1744 181h2v3h-2zM1745 181h2v3h-2zM1745 181h2v3h-2zM1746 182h2v3h-2zM1746 183h2v3h-2zM1746 184h2v3h-2zM1747 186h2v3h-2zM1747 189h2v3h-2zM1748 191h2v3h-2zM1748 194h2v3h-2zM1748 197h2v3h-2zM1749 201h2v3h-2zM1749 204h2v3h-2zM1750 208h2v3h-2zM1750 211h2v3h-2zM1750 214h2v3h-2zM1751 217h2v3h-2zM1751 220h2v3h-2zM1752 223h2v3h-2zM1752 225h2v3h-2zM1752 226h2v3h-2zM1753 226h2v3h-2zM1753 226h2v3h-2zM1754 226h2v3h-2zM1754 226h2v3h-2zM1754 225h2v3h-2zM1755 225h2v3h-2zM1755 224h2v3h-2zM1756 224h2v3h-2zM1756 223h2v3h-2zM1756 223h2v3h-2zM1757 222h2v3h-2zM1757 221h2v3h-2zM1758 221h2v3h-2zM1758 220h2v3h-2zM1758 219h2v3h-2zM1759 218h2v3h-2zM1759 217h2v3h-2zM1760 215h2v3h-2zM1760 213h2v3h-2zM1760 210h2v3h-2zM1761 207h2v3h-2zM1761 204h2v3h-2zM1762 201h2v3h-2zM1762 199h2v3h-2zM1762 196h2v3h-2zM1763 194h2v3h-2zM1763 192h2v3h-2zM1764 190h2v3h-2zM1764 187h2v3h-2zM1764 185h2v3h-2zM1765 183h2v3h-2zM1765 180h2v3h-2zM1766 178h2v3h-2zM1766 176h2v3h-2zM1766 173h2v3h-2zM1767 170h2v3h-2zM1767 166h2v3h-2zM1768 163h2v3h-2zM1768 162h2v3h-2zM1768 163h2v3h-2zM1769 164h2v3h-2zM1769 165h2v3h-2zM1770 166h2v3h-2zM1770 167h2v3h-2zM1770 167h2v3h-2zM1771 168h2v3h-2zM1771 168h2v3h-2zM1772 168h2v3h-2zM1772 168h2v3h-2zM1772 169h2v3h-2zM1773 169h2v3h-2zM1773 169h2v3h-2zM1774 169h2v3h-2zM1774 169h2v3h-2zM1774 168h2v3h-2zM1775 168h2v3h-2zM1775 165h2v3h-2zM1776 161h2v3h-2zM1776 159h2v3h-2zM1776 158h2v3h-2zM1777 157h2v3h-2zM1777 156h2v3h-2zM1778 156h2v3h-2zM1778 155h2v3h-2zM1778 155h2v3h-2zM1779 154h2v3h-2zM1779 154h2v3h-2zM1780 154h2v3h-2zM1780 154h2v3h-2zM1780 154h2v3h-2zM1781 155h2v3h-2zM1781 156h2v3h-2zM1782 156h2v3h-2zM1782 157h2v3h-2zM1782 158h2v3h-2zM1783 159h2v3h-2zM1783 160h2v3h-2zM1784 161h2v3h-2zM1784 162h2v3h-2zM1784 163h2v3h-2zM1785 164h2v3h-2zM1785 165h2v3h-2zM1786 166h2v3h-2zM1786 167h2v3h-2zM1786 168h2v3h-2zM1787 169h2v3h-2zM1787 170h2v3h-2zM1788 171h2v3h-2zM1788 172h2v3h-2zM1788 173h2v3h-2zM1789 174h2v3h-2zM1789 174h2v3h-2zM1790 174h2v3h-2zM1790 173h2v3h-2zM1790 172h2v3h-2zM1791 171h2v3h-2zM1791 170h2v3h-2zM1792 169h2v3h-2zM1792 167h2v3h-2zM1792 166h2v3h-2zM1793 164h2v3h-2zM1793 163h2v3h-2zM1794 161h2v3h-2zM1794 159h2v3h-2zM1794 158h2v3h-2zM1795 156h2v3h-2zM1795 155h2v3h-2zM1796 154h2v3h-2zM1796 154h2v3h-2zM1796 153h2v3h-2zM1797 152h2v3h-2zM1797 152h2v3h-2zM1798 151h2v3h-2zM1798 151h2v3h-2zM1798 151h2v3h-2zM1799 150h2v3h-2zM1799 150h2v3h-2zM1800 150h2v3h-2zM1800 151h2v3h-2zM1800 151h2v3h-2zM1801 152h2v3h-2zM1801 153h2v3h-2zM1802 153h2v3h-2zM1802 154h2v3h-2zM1802 155h2v3h-2zM1803 156h2v3h-2zM1803 157h2v3h-2zM1804 158h2v3h-2zM1804 158h2v3h-2zM1804 159h2v3h-2zM1805 159h2v3h-2zM1805 160h2v3h-2zM1806 161h2v3h-2zM1806 161h2v3h-2zM1806 162h2v3h-2zM1807 163h2v3h-2zM1807 163h2v3h-2zM1808 164h2v3h-2zM1808 164h2v3h-2zM1808 165h2v3h-2zM1809 165h2v3h-2zM1809 166h2v3h-2zM1810 166h2v3h-2zM1810 167h2v3h-2zM1810 167h2v3h-2zM1811 168h2v3h-2zM1811 168h2v3h-2zM1812 169h2v3h-2zM1812 142h2v2h-2zM1813 133h2v2h-2zM1813 131h2v2h-2zM1813 128h2v2h-2zM1814 126h2v2h-2zM1814 124h2v2h-2zM1814 123h2v2h-2zM1815 121h2v2h-2zM1815 119h2v2h-2zM1815 118h2v2h-2zM1816 116h2v2h-2zM1816 115h2v2h-2zM1816 114h2v2h-2zM1817 113h2v2h-2zM1817 112h2v2h-2zM1818 111h2v2h-2zM1818 110h2v2h-2zM1818 109h2v2h-2zM1819 107h2v2h-2zM1819 106h2v2h-2zM1819 104h2v2h-2zM1820 103h2v2h-2zM1820 101h2v2h-2zM1820 100h2v2h-2zM1821 100h2v2h-2zM1821 99h2v2h-2zM1821 98h2v2h-2zM1822 98h2v2h-2zM1822 97h2v2h-2zM1822 97h2v2h-2zM1823 96h2v2h-2zM1823 96h2v2h-2zM1823 95h2v2h-2zM1824 95h2v2h-2zM1824 94h2v2h-2zM1825 94h2v2h-2zM1825 94h2v2h-2zM1825 93h2v2h-2zM1826 93h2v2h-2zM1826 93h2v2h-2zM1826 92h2v2h-2zM1827 92h2v2h-2zM1827 92h2v2h-2zM1827 91h2v2h-2zM1828 91h2v2h-2zM1828 91h2v2h-2zM1828 90h2v2h-2zM1829 90h2v2h-2zM1829 90h2v2h-2zM1829 89h2v2h-2zM1830 89h2v2h-2zM1830 88h2v2h-2zM1830 88h2v2h-2zM1831 87h2v2h-2zM1831 87h2v2h-2zM1832 86h2v2h-2zM1832 86h2v2h-2zM1832 85h2v2h-2zM1833 84h2v2h-2zM1833 83h2v2h-2zM1833 83h2v2h-2zM1834 82h2v2h-2zM1834 82h2v2h-2zM1834 81h2v2h-2zM1835 81h2v2h-2zM1835 81h2v2h-2zM1835 80h2v2h-2zM1836 80h2v2h-2zM1836 80h2v2h-2zM1836 80h2v2h-2zM1837 80h2v2h-2zM1837 79h2v2h-2zM1837 79h2v2h-2zM1838 79h2v2h-2zM1838 79h2v2h-2zM1839 79h2v2h-2zM1839 79h2v2h-2zM1839 80h2v2h-2zM1840 80h2v2h-2zM1840 80h2v2h-2zM1840 81h2v2h-2zM1841 81h2v2h-2zM1841 81h2v2h-2zM1841 81h2v2h-2zM1842 81h2v2h-2zM1842 81h2v2h-2zM1842 81h2v2h-2zM1843 81h2v2h-2zM1843 80h2v2h-2zM1843 80h2v2h-2zM1844 79h2v2h-2zM1844 78h2v2h-2zM1844 77h2v2h-2zM1845 76h2v2h-2zM1845 75h2v2h-2zM1846 73h2v2h-2zM1846 70h2v2h-2zM1846 68h2v2h-2zM1847 67h2v2h-2zM1847 67h2v2h-2zM1847 67h2v2h-2zM1848 67h2v2h-2zM1848 66h2v2h-2zM1848 66h2v2h-2zM1849 66h2v2h-2zM1849 66h2v2h-2zM1849 66h2v2h-2zM1850 66h2v2h-2zM1850 66h2v2h-2zM1850 66h2v2h-2zM1851 65h2v2h-2zM1851 65h2v2h-2zM1851 65h2v2h-2zM1852 65h2v2h-2zM1852 65h2v2h-2zM1853 65h2v2h-2zM1853 65h2v2h-2zM1853 65h2v2h-2zM1854 65h2v2h-2zM1854 64h2v2h-2zM1854 64h2v2h-2zM1855 64h2v2h-2zM1855 64h2v2h-2zM1855 64h2v2h-2zM1856 64h2v2h-2zM1856 64h2v2h-2zM1856 64h2v2h-2zM1857 64h2v2h-2zM1857 64h2v2h-2zM1857 63h2v2h-2zM1858 63h2v2h-2zM1858 63h2v2h-2zM1858 63h2v2h-2zM1859 64h2v2h-2zM1859 64h2v2h-2zM1860 64h2v2h-2zM1860 64h2v2h-2zM1860 64h2v2h-2zM1861 65h2v2h-2zM1861 65h2v2h-2zM1861 64h2v2h-2zM1862 64h2v2h-2zM1862 63h2v2h-2zM1862 63h2v2h-2zM1863 62h2v2h-2zM1863 61h2v2h-2zM1863 60h2v2h-2zM1864 60h2v2h-2zM1864 59h2v2h-2zM1864 59h2v2h-2zM1865 59h2v2h-2zM1865 58h2v2h-2zM1865 58h2v2h-2zM1866 58h2v2h-2zM1866 58h2v2h-2zM1867 57h2v2h-2zM1867 57h2v2h-2zM1867 57h2v2h-2zM1868 57h2v2h-2zM1868 56h2v2h-2zM1868 56h2v2h-2zM1869 56h2v2h-2zM1869 56h2v2h-2zM1869 56h2v2h-2zM1870 56h2v2h-2zM1870 56h2v2h-2zM1870 56h2v2h-2zM1871 55h2v2h-2zM1871 55h2v2h-2zM1871 55h2v2h-2zM1872 55h2v2h-2zM1872 55h2v2h-2zM1872 55h2v2h-2zM1873 55h2v2h-2zM1873 55h2v2h-2zM1874 55h2v2h-2zM1874 54h2v2h-2zM1874 54h2v2h-2zM1875 54h2v2h-2zM1875 54h2v2h-2zM1875 54h2v2h-2zM1876 54h2v2h-2zM1876 54h2v2h-2zM1876 54h2v2h-2zM1877 54h2v2h-2zM1877 53h2v2h-2zM1877 53h2v2h-2zM1878 53h2v2h-2zM1878 53h2v2h-2zM1878 53h2v2h-2zM1879 53h2v2h-2zM1879 53h2v2h-2zM1879 53h2v2h-2zM1880 52h2v2h-2zM1880 52h2v2h-2zM1881 52h2v2h-2zM1881 52h2v2h-2zM1881 52h2v2h-2zM1882 52h2v2h-2zM1882 52h2v2h-2zM1882 52h2v2h-2zM1883 51h2v2h-2zM1883 51h2v2h-2zM1883 51h2v2h-2zM1884 51h2v2h-2zM1884 51h2v2h-2zM1884 51h2v2h-2zM1885 51h2v2h-2zM1885 51h2v2h-2zM1885 50h2v2h-2zM1886 50h2v2h-2zM1886 50h2v2h-2zM1886 50h2v2h-2zM1887 50h2v2h-2zM1887 50h2v2h-2zM1888 50h2v2h-2zM1888 50h2v2h-2zM1888 49h2v2h-2zM1889 49h2v2h-2zM1889 49h2v2h-2zM1889 49h2v2h-2zM1890 49h2v2h-2zM1890 49h2v2h-2zM1890 49h2v2h-2zM1891 48h2v2h-2zM1891 48h2v2h-2zM1891 48h2v2h-2zM1892 48h2v2h-2zM1892 48h2v2h-2zM1892 48h2v2h-2zM1893 48h2v2h-2zM1893 48h2v2h-2zM1893 48h2v2h-2zM1894 48h2v2h-2zM1894 47h2v2h-2zM1895 47h2v2h-2zM1895 47h2v2h-2zM1895 47h2v2h-2zM1896 47h2v2h-2zM1896 47h2v2h-2zM1896 47h2v2h-2zM1897 47h2v2h-2zM1897 47h2v2h-2zM1897 47h2v2h-2zM1898 47h2v2h-2zM1898 47h2v2h-2zM1898 47h2v2h-2zM1899 47h2v2h-2zM1899 47h2v2h-2zM1899 47h2v2h-2zM1900 47h2v2h-2zM1900 47h2v2h-2zM1900 47h2v2h-2zM1901 47h2v2h-2zM1901 47h2v2h-2zM1902 47h2v2h-2zM1902 47h2v2h-2zM1902 47h2v2h-2zM1903 47h2v2h-2zM1903 47h2v2h-2zM1903 47h2v2h-2zM1904 47h2v2h-2zM1904 47h2v2h-2zM1904 47h2v2h-2zM1905 47h2v2h-2zM1905 47h2v2h-2zM1905 47h2v2h-2zM1906 47h2v2h-2zM1906 47h2v2h-2zM1906 47h2v2h-2zM1907 47h2v2h-2zM1907 47h2v2h-2zM1907 47h2v2h-2zM1908 47h2v2h-2zM1908 47h2v2h-2zM1909 47h2v2h-2zM1909 47h2v2h-2zM1909 47h2v2h-2zM1910 47h2v2h-2zM1910 47h2v2h-2zM1910 47h2v2h-2zM1911 47h2v2h-2zM1911 47h2v2h-2zM1911 47h2v2h-2zM1912 47h2v2h-2zM1912 47h2v2h-2zM1912 47h2v2h-2zM1913 47h2v2h-2zM1913 47h2v2h-2zM1913 47h2v2h-2zM1914 47h2v2h-2zM1914 47h2v2h-2zM1914 47h2v2h-2zM1915 47h2v2h-2zM1915 47h2v2h-2zM1916 47h2v2h-2zM1916 47h2v2h-2zM1916 47h2v2h-2zM1917 47h2v2h-2zM1917 47h2v2h-2zM1917 47h2v2h-2zM1918 47h2v2h-2zM1918 47h2v2h-2zM1918 47h2v2h-2zM1919 47h2v2h-2zM1919 47h2v2h-2zM1919 47h2v2h-2zM1920 47h2v2h-2zM1920 47h2v2h-2zM1920 47h2v2h-2zM1921 47h2v2h-2zM1921 47h2v2h-2zM1921 47h2v2h-2zM1922 47h2v2h-2zM1922 47h2v2h-2zM1923 47h2v2h-2zM1923 47h2v2h-2zM1923 47h2v2h-2zM1924 47h2v2h-2zM1924 47h2v2h-2zM1924 47h2v2h-2zM1925 47h2v2h-2zM1925 47h2v2h-2zM1925 47h2v2h-2zM1926 47h2v2h-2zM1926 47h2v2h-2zM1926 47h2v2h-2zM1927 47h2v2h-2zM1927 47h2v2h-2zM1927 47h2v2h-2zM1928 47h2v2h-2zM1928 47h2v2h-2zM1928 47h2v2h-2zM1929 47h2v2h-2zM1929 47h2v2h-2zM1930 47h2v2h-2zM1930 47h2v2h-2zM1930 47h2v2h-2zM1931 47h2v2h-2zM1931 47h2v2h-2zM1931 47h2v2h-2zM1932 47h2v2h-2zM1932 47h2v2h-2zM1932 47h2v2h-2zM1933 47h2v2h-2zM1933 47h2v2h-2zM1933 47h2v2h-2zM1934 47h2v2h-2zM1934 47h2v2h-2zM1934 47h2v2h-2zM1935 47h2v2h-2zM1935 47h2v2h-2zM1935 47h2v2h-2zM1936 47h2v2h-2zM1936 47h2v2h-2zM1937 47h2v2h-2zM1937 47h2v2h-2zM1937 47h2v2h-2zM1938 47h2v2h-2zM1938 47h2v2h-2zM1938 47h2v2h-2zM1939 47h2v2h-2zM1939 47h2v2h-2zM1939 47h2v2h-2zM1940 47h2v2h-2zM1940 47h2v2h-2zM1940 47h2v2h-2zM1941 47h2v2h-2zM1941 47h2v2h-2zM1941 47h2v2h-2zM1942 47h2v2h-2zM1942 47h2v2h-2zM1942 47h2v2h-2zM1943 47h2v2h-2zM1943 47h2v2h-2zM1944 47h2v2h-2zM1944 47h2v2h-2zM1944 47h2v2h-2zM1945 47h2v2h-2zM1945 47h2v2h-2zM1945 47h2v2h-2zM1946 47h2v2h-2zM1946 47h2v2h-2zM1946 47h2v2h-2zM1947 47h2v2h-2zM1947 47h2v2h-2zM1947 47h2v2h-2zM1948 47h2v2h-2zM1948 47h2v2h-2zM1948 47h2v2h-2zM1949 47h2v2h-2zM1949 47h2v2h-2zM1949 47h2v2h-2zM1950 47h2v2h-2zM1950 47h2v2h-2zM1951 47h2v2h-2zM1951 47h2v2h-2zM1951 47h2v2h-2zM1952 47h2v2h-2zM1952 47h2v2h-2zM1952 47h2v2h-2zM1953 47h2v2h-2zM1953 47h2v2h-2zM1953 47h2v2h-2zM1954 47h2v2h-2zM1954 47h2v2h-2zM1954 47h2v2h-2zM1955 47h2v2h-2zM1955 47h2v2h-2zM1955 47h2v2h-2zM1956 47h2v2h-2zM1956 47h2v2h-2zM1956 47h2v2h-2zM1957 47h2v2h-2zM1957 47h2v2h-2zM1958 47h2v2h-2zM1958 47h2v2h-2zM1958 47h2v2h-2zM1959 47h2v2h-2zM1959 47h2v2h-2zM1959 47h2v2h-2zM1960 47h2v2h-2zM1960 47h2v2h-2zM1960 47h2v2h-2zM1961 47h2v2h-2zM1961 47h2v2h-2zM1961 47h2v2h-2zM1962 47h2v2h-2zM1962 47h2v2h-2zM1962 47h2v2h-2zM1963 47h2v2h-2zM1963 47h2v2h-2zM1963 47h2v2h-2zM1964 47h2v2h-2zM1964 47h2v2h-2zM1965 47h2v2h-2zM1965 47h2v2h-2zM1965 47h2v2h-2zM1966 47h2v2h-2zM1966 47h2v2h-2zM1966 47h2v2h-2zM1967 47h2v2h-2zM1967 47h2v2h-2zM1967 47h2v2h-2zM1968 47h2v2h-2zM1968 47h2v2h-2zM1968 47h2v2h-2zM1969 47h2v2h-2zM1969 47h2v2h-2zM1969 47h2v2h-2zM1970 47h2v2h-2zM1970 47h2v2h-2zM1970 47h2v2h-2zM1971 47h2v2h-2zM1971 47h2v2h-2zM1972 47h2v2h-2zM1972 47h2v2h-2zM1972 47h2v2h-2zM1973 47h2v2h-2zM1973 47h2v2h-2zM1973 47h2v2h-2zM1974 47h2v2h-2zM1974 47h2v2h-2zM1974 47h2v2h-2zM1975 47h2v2h-2zM1975 47h2v2h-2zM1975 47h2v2h-2zM1976 47h2v2h-2zM1976 47h2v2h-2zM1976 47h2v2h-2zM1977 47h2v2h-2zM1977 47h2v2h-2zM1977 47h2v2h-2zM1978 47h2v2h-2zM1978 47h2v2h-2zM1979 47h2v2h-2zM1979 47h2v2h-2zM1979 47h2v2h-2zM1980 47h2v2h-2zM1980 47h2v2h-2zM1980 47h2v2h-2zM1981 47h2v2h-2zM1981 47h2v2h-2zM1981 47h2v2h-2zM1982 47h2v2h-2zM1982 47h2v2h-2zM1982 47h2v2h-2zM1983 47h2v2h-2zM1983 47h2v2h-2zM1983 47h2v2h-2zM1984 47h2v2h-2zM1812 146h2v2h-2zM1812 150h2v2h-2zM1812 154h2v2h-2zM1812 158h2v2h-2zM1812 162h2v2h-2zM1812 166h2v2h-2zM1812 170h2v2h-2z"/>
<path d="M1810 126.5h10M1815 121.5v10M1811.5 123l7 7M1818.5 123l-7 7" stroke="#80ff40" stroke-width="1"/>
<path d="M1831 81.5h10M1836 76.5v10M1832.5 78l7 7M1839.5 78l-7 7" stroke="#ff9090" stroke-width="1"/>
</g>
</svg>
<canvas id="img" width="281" height="253" style="position:absolute;left:929px;top:48px"></canvas><script>(function(){
var c=document.getElementById('img');if(!c||!c.getContext)return;
var ctx=c.getContext('2d'),W=281,H=253,im=ctx.createImageData(W,H),d=im.data;
var s=987654321;function rnd(){s^=s<<13;s^=s>>>17;s^=s<<5;return ((s>>>0)%100000)/100000;}
function g(){var u=rnd()||1e-6,v=rnd();return Math.sqrt(-2*Math.log(u))*Math.cos(6.2832*v);}
var NX=140,NY=118,val=new Float32Array(NX*NY);
var CG=48,cgr=new Float32Array(CG*CG);for(var q=0;q<CG*CG;q++)cgr[q]=g();
function vn(x,y){var xi=Math.floor(x),yi=Math.floor(y),fx=x-xi,fy=y-yi;
 function at(a,b){return cgr[((b%CG+CG)%CG)*CG+((a%CG+CG)%CG)];}
 fx=fx*fx*(3-2*fx);fy=fy*fy*(3-2*fy);
 return (at(xi,yi)*(1-fx)+at(xi+1,yi)*fx)*(1-fy)+(at(xi,yi+1)*(1-fx)+at(xi+1,yi+1)*fx)*fy;}
var cx=1060.5-929,cy=168-48,rx=121,ry=130;
function G(x,m,sg){return Math.exp(-(x-m)*(x-m)/(2*sg*sg));}
for(var j=0;j<NY;j++)for(var i=0;i<NX;i++){
 var sx=(i+4)*2.08-10.2+1.04, sy=j*2.215-0.6+1.1;
 var dx=(sx-cx)/rx,dy=(sy-cy)/ry,rho=Math.sqrt(dx*dx+dy*dy),dist=(rho-1)*123,v;
 var cs=dx/(rho||1);
 if(dist<0){
  v=975+50*dy+40*dx+220*Math.max(0,dx*0.6+dy*0.8-0.45)
    -210*G(Math.sqrt((sx-80)*(sx-80)+(sy-100)*(sy-100)),0,62)
    -60*G(Math.sqrt((sx-140)*(sx-140)+(sy-20)*(sy-20)),0,45)
    +60*G(dist,-5,5)
    +vn(i/2.2,j/2.2)*50+g()*50;
  if(dist>-4) v=v*(1-0.4*(dist+4)/4);
 } else {
  var sp=6.5+1.8*cs, amp=1-0.25*cs;
  v=65+170*Math.exp(-dist/7)+amp*(470*G(dist,sp,1.7)+380*G(dist,2*sp,1.9)+180*G(dist,3*sp,2.1))+g()*20;
 }
 val[j*NX+i]=v;
}
function col(v){
 if(v<=65)return[0,0,0];
 if(v<=676){return[255*(v-65)/611,0,0];}
 if(v<=1251){var t=(v-676)/575;return[255,208*t,96*t];}
 var t=Math.min(1,(v-1251)/1671);return[255,208+47*t,96+159*t];
}
for(var y=0;y<H;y++){var j=Math.floor((y+0.6)/2.215);if(j<0)j=0;if(j>=NY)j=NY-1;
 for(var x=0;x<W;x++){var i=Math.floor((x+10.2)/2.08)-4;if(i<0)i=0;if(i>=NX)i=NX-1;
  var cc=col(val[j*NX+i]),k=(y*W+x)*4;d[k]=cc[0];d[k+1]=cc[1];d[k+2]=cc[2];d[k+3]=255;}}
ctx.putImageData(im,0,0);
})();
</script>
</body></html>
